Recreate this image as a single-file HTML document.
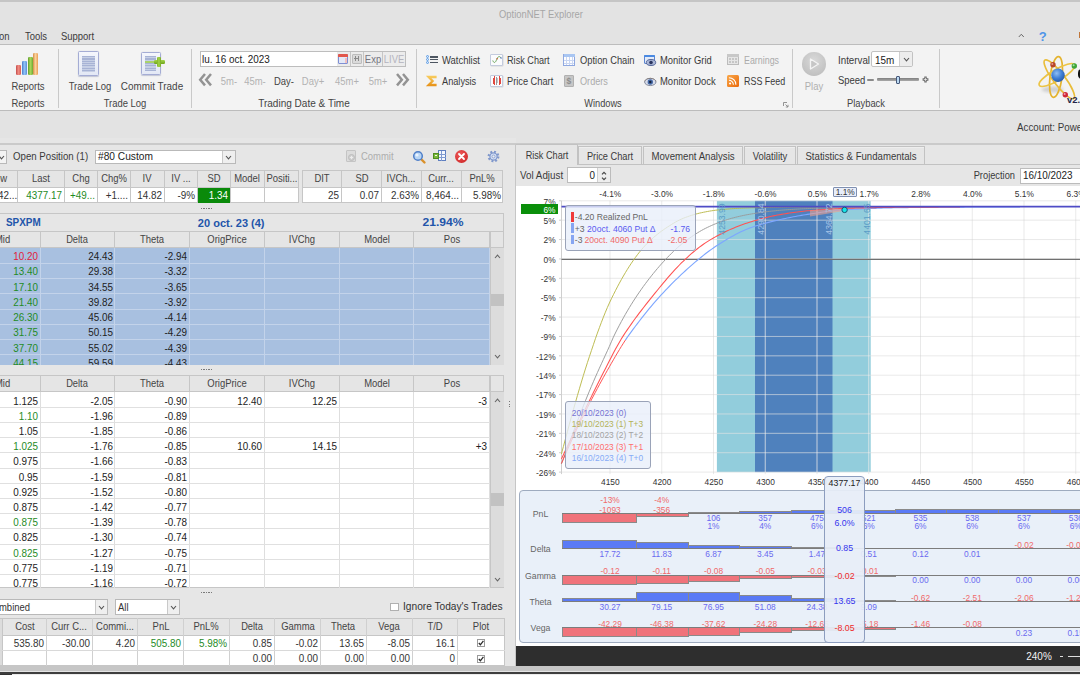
<!DOCTYPE html>
<html><head><meta charset="utf-8"><title>OptionNET Explorer</title>
<style>
html,body{margin:0;padding:0;background:#e4e4e4;}
#app{position:relative;width:1080px;height:675px;overflow:hidden;background:#e4e4e4;font-family:"Liberation Sans",sans-serif;}
.t{position:absolute;white-space:nowrap;line-height:1;display:block;}
.r{position:absolute;box-sizing:border-box;}
svg{position:absolute;overflow:visible;}
</style></head><body><div id="app">
<div class="r" style="left:0px;top:0px;width:1080px;height:2px;background:#c5c5c5;"></div>
<div class="r" style="left:0px;top:2px;width:1080px;height:43px;background:#e3e3e3;"></div>
<span class="t" style="left:541px;top:13.9px;font-size:10.5px;color:#a6a6a6;transform:translate(-50%,-50%) scaleX(0.895);transform-origin:50% 50%;">OptionNET Explorer</span>
<span class="t" style="left:-1px;top:35.9px;font-size:10.5px;color:#3a3a3a;transform:translate(0,-50%) scaleX(0.9);transform-origin:0 50%;">on</span>
<span class="t" style="left:24.5px;top:35.9px;font-size:10.5px;color:#3a3a3a;transform:translate(0,-50%) scaleX(0.9);transform-origin:0 50%;">Tools</span>
<span class="t" style="left:61px;top:35.9px;font-size:10.5px;color:#3a3a3a;transform:translate(0,-50%) scaleX(0.9);transform-origin:0 50%;">Support</span>
<div class="r" style="left:0px;top:44.3px;width:1080px;height:66.8px;background:#f3f3f3;border-top:1px solid #bdbdbd;border-bottom:1px solid #bcbcbc;"></div>
<div class="r" style="left:0px;top:111px;width:1080px;height:33px;background:#e3e3e3;"></div>
<div class="r" style="left:58px;top:48.5px;width:1px;height:59px;background:#c9c9c9;"></div>
<div class="r" style="left:191px;top:48.5px;width:1px;height:59px;background:#c9c9c9;"></div>
<div class="r" style="left:416px;top:48.5px;width:1px;height:59px;background:#c9c9c9;"></div>
<div class="r" style="left:792px;top:48.5px;width:1px;height:59px;background:#c9c9c9;"></div>
<div class="r" style="left:939px;top:48.5px;width:1px;height:59px;background:#c9c9c9;"></div>
<span class="t" style="left:27.5px;top:85.9px;font-size:10.5px;color:#444;transform:translate(-50%,-50%) scaleX(0.9);transform-origin:50% 50%;">Reports</span>
<span class="t" style="left:27.5px;top:102.9px;font-size:10.5px;color:#444;transform:translate(-50%,-50%) scaleX(0.9);transform-origin:50% 50%;">Reports</span>
<span class="t" style="left:89.5px;top:85.9px;font-size:10.5px;color:#444;transform:translate(-50%,-50%) scaleX(0.9);transform-origin:50% 50%;">Trade Log</span>
<span class="t" style="left:152px;top:85.9px;font-size:10.5px;color:#444;transform:translate(-50%,-50%) scaleX(0.945);transform-origin:50% 50%;">Commit Trade</span>
<span class="t" style="left:125px;top:102.9px;font-size:10.5px;color:#444;transform:translate(-50%,-50%) scaleX(0.9);transform-origin:50% 50%;">Trade Log</span>
<span class="t" style="left:304px;top:102.9px;font-size:10.5px;color:#444;transform:translate(-50%,-50%) scaleX(0.955);transform-origin:50% 50%;">Trading Date &amp; Time</span>
<span class="t" style="left:603px;top:102.9px;font-size:10.5px;color:#444;transform:translate(-50%,-50%) scaleX(0.88);transform-origin:50% 50%;">Windows</span>
<span class="t" style="left:866px;top:102.9px;font-size:10.5px;color:#444;transform:translate(-50%,-50%) scaleX(0.89);transform-origin:50% 50%;">Playback</span>
<div class="r" style="left:15.8px;top:65.4px;width:5.3px;height:9.5px;background:linear-gradient(90deg,#c44a4a,#ee8a80 45%,#ee8a80 55%,#d65a54);border-radius:1.3px;"></div>
<div class="r" style="left:21.8px;top:61.3px;width:5.3px;height:13.600000000000009px;background:linear-gradient(90deg,#4a7aca,#8cc0f4 45%,#8cc0f4 55%,#5a8cd8);border-radius:1.3px;"></div>
<div class="r" style="left:27.6px;top:57.1px;width:5.3px;height:17.800000000000004px;background:linear-gradient(90deg,#5c9c2a,#a6d458 45%,#a6d458 55%,#6aa832);border-radius:1.3px;"></div>
<div class="r" style="left:33.2px;top:53.1px;width:5.3px;height:21.800000000000004px;background:linear-gradient(90deg,#d48c44,#fad09a 45%,#fad09a 55%,#ea9c50);border-radius:1.3px;"></div>
<div class="r" style="left:78.3px;top:51.3px;width:20.6px;height:24.5px;background:linear-gradient(180deg,#f4f6fc,#e3e8f5);border:1px solid #a4acd4;border-radius:1.5px;box-shadow:0 0.5px 1px rgba(120,130,170,0.4);"></div>
<div class="r" style="left:82px;top:55.8px;width:13.3px;height:16.1px;background:repeating-linear-gradient(180deg,#a7b3d5 0,#a7b3d5 1.25px,#c6cfe5 1.25px,#c6cfe5 2.3px);"></div>
<div class="r" style="left:141.3px;top:52.4px;width:19.3px;height:22.5px;background:linear-gradient(180deg,#f4f6fc,#e3e8f5);border:1px solid #a4acd4;border-radius:1.5px;box-shadow:0 0.5px 1px rgba(120,130,170,0.4);"></div>
<div class="r" style="left:145.3px;top:56.2px;width:10.8px;height:14.8px;background:repeating-linear-gradient(180deg,#a7b3d5 0,#a7b3d5 1.25px,#c6cfe5 1.25px,#c6cfe5 2.3px);"></div>
<div class="r" style="left:145.3px;top:60.6px;width:10px;height:2.6px;background:#a8d26c;"></div>
<div class="r" style="left:154px;top:59.7px;width:10.6px;height:4.2px;background:linear-gradient(180deg,#a4d44a,#6fa51c);border-radius:1.2px;"></div>
<div class="r" style="left:157.2px;top:56.6px;width:4.2px;height:10.5px;background:linear-gradient(90deg,#7fb526,#a4d44a 50%,#74aa20);border-radius:1.2px;"></div>
<div class="r" style="left:199.5px;top:51px;width:206.5px;height:16.3px;background:#ececec;border:1px solid #bdbdbd;"></div>
<div class="r" style="left:200.5px;top:52px;width:136.5px;height:14.3px;background:#fff;"></div>
<span class="t" style="left:202px;top:59.199999999999996px;font-size:11px;color:#222;transform:translate(0,-50%) scaleX(0.9);transform-origin:0 50%;">lu. 16 oct. 2023</span>
<div class="r" style="left:338.2px;top:54.2px;width:9.8px;height:9.4px;background:#e4e9f7;border:1px solid #7f8fd4;border-radius:1px;"></div>
<div class="r" style="left:338.2px;top:54.2px;width:9.8px;height:2.6px;background:#e2574c;border-radius:1px 1px 0 0;"></div>
<div class="r" style="left:344.5px;top:57.5px;width:2.5px;height:5px;background:#f0c0c0;"></div>
<div class="r" style="left:350px;top:52px;width:1px;height:14.3px;background:#c6c6c6;"></div>
<div class="r" style="left:351.7px;top:53.7px;width:10px;height:10px;background:#dadada;border:1px solid #bcbcbc;border-radius:1px;"></div>
<div class="r" style="left:354px;top:58.3px;width:5.4px;height:1px;background:#8a8a8a;"></div>
<div class="r" style="left:355.3px;top:56.3px;width:1px;height:5px;background:#8a8a8a;"></div>
<div class="r" style="left:358px;top:56.3px;width:1px;height:5px;background:#8a8a8a;"></div>
<div class="r" style="left:363px;top:52px;width:1px;height:14.3px;background:#c6c6c6;"></div>
<span class="t" style="left:373px;top:59.3px;font-size:10.5px;color:#74747f;transform:translate(-50%,-50%) scaleX(0.9);transform-origin:50% 50%;">Exp</span>
<div class="r" style="left:382.3px;top:52px;width:1px;height:14.3px;background:#c6c6c6;"></div>
<span class="t" style="left:394.3px;top:59.3px;font-size:10.5px;color:#b4b4be;transform:translate(-50%,-50%) scaleX(0.9);transform-origin:50% 50%;">LIVE</span>
<svg style="left:197.5px;top:73.3px" width="16" height="13.4" viewBox="0 0 16 13.4"><path d="M7 1 L2.2 6.7 L7 12.4 M13 1 L8.2 6.7 L13 12.4" fill="none" stroke="#939393" stroke-width="2.5"/></svg>
<svg style="left:393.5px;top:73.3px" width="16" height="13.4" viewBox="0 0 16 13.4"><path d="M3 1 L7.8 6.7 L3 12.4 M9 1 L13.8 6.7 L9 12.4" fill="none" stroke="#939393" stroke-width="2.5"/></svg>
<span class="t" style="left:228.5px;top:80.5px;font-size:10.5px;color:#b2b2b2;transform:translate(-50%,-50%) scaleX(0.9);transform-origin:50% 50%;">5m-</span>
<span class="t" style="left:255px;top:80.5px;font-size:10.5px;color:#b2b2b2;transform:translate(-50%,-50%) scaleX(0.9);transform-origin:50% 50%;">45m-</span>
<span class="t" style="left:284px;top:80.5px;font-size:10.5px;color:#444;transform:translate(-50%,-50%) scaleX(0.9);transform-origin:50% 50%;">Day-</span>
<span class="t" style="left:313px;top:80.5px;font-size:10.5px;color:#b2b2b2;transform:translate(-50%,-50%) scaleX(0.9);transform-origin:50% 50%;">Day+</span>
<span class="t" style="left:346.5px;top:80.5px;font-size:10.5px;color:#b2b2b2;transform:translate(-50%,-50%) scaleX(0.9);transform-origin:50% 50%;">45m+</span>
<span class="t" style="left:377.5px;top:80.5px;font-size:10.5px;color:#b2b2b2;transform:translate(-50%,-50%) scaleX(0.9);transform-origin:50% 50%;">5m+</span>
<span class="t" style="left:441.5px;top:59.699999999999996px;font-size:10.5px;color:#3a3a3a;transform:translate(0,-50%) scaleX(0.9);transform-origin:0 50%;">Watchlist</span>
<span class="t" style="left:441.5px;top:81.0px;font-size:10.5px;color:#3a3a3a;transform:translate(0,-50%) scaleX(0.875);transform-origin:0 50%;">Analysis</span>
<span class="t" style="left:507px;top:59.699999999999996px;font-size:10.5px;color:#3a3a3a;transform:translate(0,-50%) scaleX(0.87);transform-origin:0 50%;">Risk Chart</span>
<span class="t" style="left:507px;top:81.0px;font-size:10.5px;color:#3a3a3a;transform:translate(0,-50%) scaleX(0.88);transform-origin:0 50%;">Price Chart</span>
<span class="t" style="left:579.5px;top:59.699999999999996px;font-size:10.5px;color:#3a3a3a;transform:translate(0,-50%) scaleX(0.89);transform-origin:0 50%;">Option Chain</span>
<span class="t" style="left:579.5px;top:81.0px;font-size:10.5px;color:#ababab;transform:translate(0,-50%) scaleX(0.87);transform-origin:0 50%;">Orders</span>
<span class="t" style="left:660px;top:59.699999999999996px;font-size:10.5px;color:#3a3a3a;transform:translate(0,-50%) scaleX(0.895);transform-origin:0 50%;">Monitor Grid</span>
<span class="t" style="left:660px;top:81.0px;font-size:10.5px;color:#3a3a3a;transform:translate(0,-50%) scaleX(0.9);transform-origin:0 50%;">Monitor Dock</span>
<span class="t" style="left:744px;top:59.699999999999996px;font-size:10.5px;color:#ababab;transform:translate(0,-50%) scaleX(0.845);transform-origin:0 50%;">Earnings</span>
<span class="t" style="left:744px;top:81.0px;font-size:10.5px;color:#3a3a3a;transform:translate(0,-50%) scaleX(0.85);transform-origin:0 50%;">RSS Feed</span>
<div class="r" style="left:425.8px;top:55.4px;width:3px;height:3px;background:#dbe9fb;border:1px solid #5a9be6;border-radius:50%;"></div>
<div class="r" style="left:429.8px;top:56.1px;width:7.8px;height:1.45px;background:#4d5661;"></div>
<div class="r" style="left:425.8px;top:58.4px;width:3px;height:3px;background:#dbe9fb;border:1px solid #5a9be6;border-radius:50%;"></div>
<div class="r" style="left:429.8px;top:59.050000000000004px;width:7.8px;height:1.45px;background:#4d5661;"></div>
<div class="r" style="left:425.8px;top:61.4px;width:3px;height:3px;background:#dbe9fb;border:1px solid #5a9be6;border-radius:50%;"></div>
<div class="r" style="left:429.8px;top:62.0px;width:7.8px;height:1.45px;background:#4d5661;"></div>
<svg style="left:426px;top:74.5px" width="12" height="12" viewBox="0 0 12 12"><defs><linearGradient id="sg" x1="0" y1="0" x2="0" y2="1"><stop offset="0" stop-color="#f7c95a"/><stop offset="1" stop-color="#e8951c"/></linearGradient></defs><path d="M10.6 2 L2.6 2 L6.6 6 L2.6 10 L10.6 10" fill="none" stroke="url(#sg)" stroke-width="2.3" stroke-linejoin="miter"/></svg>
<div class="r" style="left:490.4px;top:53.6px;width:12.2px;height:12px;background:#fbfbfd;border:1px solid #c3cbdd;border-radius:1px;box-shadow:0.5px 0.5px 0 #d8d8d8;"></div>
<svg style="left:491.5px;top:55px" width="10" height="9" viewBox="0 0 10 9"><path d="M0.8 5.5 C1.8 8.5 3.4 8 4.6 4.6 S 7.6 0.6 9.2 3.2" fill="none" stroke="#6aa65a" stroke-width="1"/><circle cx="5.2" cy="3.8" r="0.8" fill="#d05a3a"/><circle cx="9" cy="3" r="0.7" fill="#4a6ad0"/></svg>
<div class="r" style="left:490.4px;top:74.6px;width:12.2px;height:12.2px;background:#fbfbfd;border:1px solid #c3cbdd;border-radius:1px;box-shadow:0.5px 0.5px 0 #d8d8d8;"></div>
<div class="r" style="left:493px;top:77.6px;width:2.2px;height:6.2px;background:#e0483e;"></div>
<div class="r" style="left:493.7px;top:76.3px;width:0.8px;height:9px;background:#e0483e;"></div>
<div class="r" style="left:495.9px;top:78.2px;width:1.8px;height:4.4px;background:#c4c4c4;"></div>
<div class="r" style="left:496.4px;top:77px;width:0.8px;height:7.5px;background:#9a9a9a;"></div>
<div class="r" style="left:498.6px;top:77.6px;width:2.2px;height:6.2px;background:#e0483e;"></div>
<div class="r" style="left:499.3px;top:76.3px;width:0.8px;height:9px;background:#e0483e;"></div>
<div class="r" style="left:563px;top:53.6px;width:12px;height:12.2px;background:#fdfdff;border:1px solid #8fa8e0;"></div>
<div class="r" style="left:563.5px;top:54.1px;width:11px;height:2.6px;background:#a9c6f2;"></div>
<div class="r" style="left:565.8px;top:56.7px;width:0.7px;height:8.6px;background:#c9d6f2;"></div>
<div class="r" style="left:568.8px;top:56.7px;width:0.7px;height:8.6px;background:#c9d6f2;"></div>
<div class="r" style="left:571.8px;top:56.7px;width:0.7px;height:8.6px;background:#c9d6f2;"></div>
<div class="r" style="left:563.6px;top:59.6px;width:10.8px;height:0.7px;background:#c9d6f2;"></div>
<div class="r" style="left:563.6px;top:62.5px;width:10.8px;height:0.7px;background:#c9d6f2;"></div>
<div class="r" style="left:564px;top:75px;width:9.8px;height:11.6px;background:#c6c6c6;border:1px solid #b0b0b0;border-radius:1px;"></div>
<span class="t" style="left:568.9px;top:80.9px;font-size:8.5px;color:#8e8e8e;transform:translate(-50%,-50%) scaleX(1);transform-origin:50% 50%;font-weight:bold;">$</span>
<div class="r" style="left:644px;top:54.5px;width:10.8px;height:9.4px;background:#e3ebf9;border:1px solid #5d86d0;border-radius:1px;"></div>
<div class="r" style="left:644px;top:54.5px;width:10.8px;height:2.8px;background:#4a8ae2;border-radius:1px 1px 0 0;"></div>
<svg style="left:646.4px;top:59px" width="10" height="7" viewBox="0 0 10 7"><ellipse cx="5" cy="3.5" rx="4.7" ry="3" fill="#aab6d6" stroke="#4a5c92" stroke-width="0.9"/><circle cx="5" cy="3.5" r="1.8" fill="#2a3560"/></svg>
<svg style="left:643.8px;top:76.5px" width="12.6" height="9.4" viewBox="0 0 12.6 9.4"><path d="M0.6 4.4 Q6.3 -1.6 12 4.4" fill="none" stroke="#a07a52" stroke-width="1.3"/><ellipse cx="6.3" cy="5" rx="5.7" ry="3.6" fill="#d5dbea" stroke="#6d7388" stroke-width="0.8"/><circle cx="6.3" cy="5" r="2.7" fill="#4468a6"/><circle cx="6.3" cy="5" r="1.2" fill="#16203a"/></svg>
<div class="r" style="left:727px;top:54px;width:11.6px;height:11.3px;background:#e6e6e6;border:1px solid #bcbcbc;"></div>
<div class="r" style="left:727px;top:54px;width:11.6px;height:3px;background:#c8c8c8;"></div>
<div class="r" style="left:729.0px;top:58.4px;width:1.9px;height:1.9px;background:#c6c6c6;"></div>
<div class="r" style="left:729.0px;top:61.3px;width:1.9px;height:1.9px;background:#c6c6c6;"></div>
<div class="r" style="left:731.9px;top:58.4px;width:1.9px;height:1.9px;background:#c6c6c6;"></div>
<div class="r" style="left:731.9px;top:61.3px;width:1.9px;height:1.9px;background:#c6c6c6;"></div>
<div class="r" style="left:734.8px;top:58.4px;width:1.9px;height:1.9px;background:#c6c6c6;"></div>
<div class="r" style="left:734.8px;top:61.3px;width:1.9px;height:1.9px;background:#c6c6c6;"></div>
<div class="r" style="left:727px;top:75px;width:11.6px;height:11.6px;background:linear-gradient(135deg,#f9a84a,#ea6a0c);border-radius:1.5px;"></div>
<svg style="left:727px;top:75px" width="11.6" height="11.6" viewBox="0 0 12 12"><circle cx="3.2" cy="8.8" r="1.1" fill="#fff"/><path d="M2 5.4 A4.6 4.6 0 0 1 6.6 10 M2 2.8 A7.2 7.2 0 0 1 9.2 10" fill="none" stroke="#fff" stroke-width="1.1"/></svg>
<svg style="left:783px;top:102px" width="6" height="6" viewBox="0 0 6 6"><path d="M0.5 4 V0.5 H4 M2.5 2.5 L5 5 M5 2.8 V5 H2.8" fill="none" stroke="#888" stroke-width="0.9"/></svg>
<div class="r" style="left:802px;top:52.2px;width:23.5px;height:23.5px;background:radial-gradient(circle at 50% 35%,#d9d9d9,#b9b9b9);border-radius:50%;"></div>
<svg style="left:809px;top:58px" width="11" height="12" viewBox="0 0 11 12"><path d="M1.5 1 L9.5 6 L1.5 11 Z" fill="#c6c6c6" stroke="#f4f4f4" stroke-width="1.3" stroke-linejoin="round"/></svg>
<span class="t" style="left:813.5px;top:85.9px;font-size:10.5px;color:#b0b0b0;transform:translate(-50%,-50%) scaleX(0.9);transform-origin:50% 50%;">Play</span>
<span class="t" style="left:837.5px;top:59.699999999999996px;font-size:10.5px;color:#3a3a3a;transform:translate(0,-50%) scaleX(0.93);transform-origin:0 50%;">Interval</span>
<div class="r" style="left:871px;top:51.3px;width:42px;height:16.2px;background:#fff;border:1px solid #c2c2c2;border-radius:2px;"></div>
<div class="r" style="left:899px;top:52.3px;width:1px;height:14.2px;background:#cfcfcf;"></div>
<div class="r" style="left:900px;top:52.3px;width:12px;height:14.2px;background:#ededed;border-radius:0 2px 2px 0;"></div>
<span class="t" style="left:875px;top:59.6px;font-size:11px;color:#222;transform:translate(0,-50%) scaleX(0.9);transform-origin:0 50%;">15m</span>
<svg style="left:902.5px;top:57px" width="7" height="5" viewBox="0 0 7 5"><path d="M1 1 L3.5 3.8 L6 1" fill="none" stroke="#555" stroke-width="1.1"/></svg>
<span class="t" style="left:837.5px;top:79.9px;font-size:10.5px;color:#3a3a3a;transform:translate(0,-50%) scaleX(0.9);transform-origin:0 50%;">Speed</span>
<div class="r" style="left:867.4px;top:78.5px;width:6.2px;height:2.4px;background:#8a8a8a;border-radius:1px;"></div>
<div class="r" style="left:877px;top:78.3px;width:42px;height:2.8px;background:linear-gradient(180deg,#7f7f7f,#a9a9a9);border-radius:1px;"></div>
<div class="r" style="left:896px;top:75.8px;width:3.7px;height:8px;background:#bcdaf2;border:1px solid #46587a;border-radius:1px;"></div>
<svg style="left:921.8px;top:76.2px" width="7" height="7" viewBox="0 0 7 7"><path d="M3.5 0.6 V6.4 M0.6 3.5 H6.4" stroke="#6a6a6a" stroke-width="2.4"/><path d="M3.5 1.7 V5.3 M1.7 3.5 H5.3" stroke="#f2f2f2" stroke-width="0.7"/></svg>
<svg style="left:1018.3px;top:33px" width="6.6" height="5" viewBox="0 0 8 6"><path d="M1 4.8 L4 1.5 L7 4.8" fill="none" stroke="#666" stroke-width="1.2"/></svg>
<span class="t" style="left:1042.7px;top:35.8px;font-size:13px;color:#4f95e8;transform:translate(-50%,-50%) scaleX(1);transform-origin:50% 50%;font-weight:bold;">?</span>
<div class="r" style="left:1078.5px;top:32px;width:2px;height:5.5px;background:#c0763a;"></div>
<svg style="left:1030px;top:48px" width="50" height="60" viewBox="1030 48 50 60">
<defs><radialGradient id="nuc" cx="40%" cy="35%" r="70%"><stop offset="0" stop-color="#8fbdf2"/><stop offset="0.55" stop-color="#3f7fd6"/><stop offset="1" stop-color="#2457a8"/></radialGradient>
<filter id="bl"><feGaussianBlur stdDeviation="1.6"/></filter></defs>
<ellipse cx="1052.5" cy="89.5" rx="11" ry="3" fill="#9a9a9a" opacity="0.4" filter="url(#bl)"/>
<ellipse cx="1056" cy="77" rx="20.5" ry="6" fill="none" stroke="#e4b32e" stroke-width="1.7" transform="rotate(97.5 1056 77)"/>
<ellipse cx="1057" cy="75" rx="20.5" ry="5.6" fill="none" stroke="#ecc445" stroke-width="1.7" transform="rotate(-30.3 1057 75)"/>
<ellipse cx="1059.3" cy="79.3" rx="24" ry="5.8" fill="none" stroke="#e9bd3a" stroke-width="1.7" transform="rotate(52.8 1059.3 79.3)"/>
<circle cx="1058" cy="75.3" r="6.7" fill="url(#nuc)"/>
<circle cx="1053" cy="64.7" r="2.7" fill="#b8452a"/><circle cx="1052.3" cy="63.9" r="1" fill="#e39a80"/>
<circle cx="1074.3" cy="66" r="2.7" fill="#3fa53a"/><circle cx="1073.6" cy="65.2" r="1" fill="#a5e09a"/>
<circle cx="1065.3" cy="94.7" r="2.7" fill="#d02a3a"/><circle cx="1064.6" cy="93.9" r="1" fill="#f2a0a8"/>
</svg>
<div class="r" style="left:1078px;top:69px;width:4px;height:9.5px;background:#111;border-radius:4px 0 0 4px;"></div>
<span class="t" style="left:1067px;top:100px;font-size:9.5px;color:#26264a;transform:translate(0,-50%) scaleX(1);transform-origin:0 50%;font-weight:bold;">v2.0</span>
<span class="t" style="left:1017px;top:127.10000000000001px;font-size:10.5px;color:#3a3a3a;transform:translate(0,-50%) scaleX(0.93);transform-origin:0 50%;">Account: Power</span>
<div class="r" style="left:0px;top:138px;width:516px;height:533px;background:#e6e6e6;"></div>
<div class="r" style="left:0px;top:143.2px;width:1080px;height:1.7px;background:#cacaca;"></div>
<div class="r" style="left:514.7px;top:144px;width:1.4px;height:524px;background:#c6c6c6;"></div>
<div class="r" style="left:-8px;top:149.5px;width:14.5px;height:14px;background:#f4f4f4;border:1px solid #b9b9b9;"></div>
<svg style="left:-2px;top:154.5px" width="7" height="5" viewBox="0 0 7 5"><path d="M1 1 L3.5 3.8 L6 1" fill="none" stroke="#555" stroke-width="1.1"/></svg>
<span class="t" style="left:13px;top:155.9px;font-size:10.5px;color:#3a3a3a;transform:translate(0,-50%) scaleX(0.92);transform-origin:0 50%;">Open Position (1)</span>
<div class="r" style="left:95px;top:149.5px;width:140.5px;height:14px;background:#fff;border:1px solid #b9b9b9;"></div>
<div class="r" style="left:222px;top:150.5px;width:12.5px;height:12px;background:#efefef;border-left:1px solid #c9c9c9;"></div>
<svg style="left:225px;top:154.5px" width="7" height="5" viewBox="0 0 7 5"><path d="M1 1 L3.5 3.8 L6 1" fill="none" stroke="#555" stroke-width="1.1"/></svg>
<span class="t" style="left:98px;top:155.9px;font-size:10.5px;color:#222;transform:translate(0,-50%) scaleX(0.97);transform-origin:0 50%;">#80 Custom</span>
<div class="r" style="left:346px;top:150px;width:10px;height:11.5px;background:#dcdcdc;border:1px solid #c4c4c4;border-radius:1px;"></div>
<div class="r" style="left:348.3px;top:154px;width:7px;height:7px;background:#d0d0d0;border:1px solid #bcbcbc;border-radius:50%;"></div>
<div class="r" style="left:350.3px;top:157px;width:3px;height:1px;background:#ececec;"></div>
<div class="r" style="left:351.3px;top:156px;width:1px;height:3px;background:#ececec;"></div>
<span class="t" style="left:361px;top:155.9px;font-size:10.5px;color:#adadad;transform:translate(0,-50%) scaleX(0.9);transform-origin:0 50%;">Commit</span>
<svg style="left:411.5px;top:149.5px" width="14" height="14" viewBox="0 0 14 14"><path d="M8.5 8.5 L12.5 12.5" stroke="#d9902a" stroke-width="2.4" stroke-linecap="round"/><circle cx="6" cy="6" r="4.3" fill="#b9d6f5" stroke="#4f7fc8" stroke-width="1.5"/><circle cx="5" cy="5" r="1.6" fill="#e9f3ff"/></svg>
<div class="r" style="left:437.5px;top:150.3px;width:8.3px;height:10.7px;background:#f4f7fd;border:1px solid #5f7fc0;"></div>
<div class="r" style="left:441.3px;top:151px;width:1px;height:9.5px;background:#7f9ad0;"></div>
<div class="r" style="left:438px;top:153.7px;width:7.5px;height:1px;background:#7f9ad0;"></div>
<div class="r" style="left:438px;top:157.2px;width:7.5px;height:1px;background:#7f9ad0;"></div>
<div class="r" style="left:433px;top:152.5px;width:5.6px;height:6.8px;background:#7ab83a;border:1px solid #4f8d22;"></div>
<div class="r" style="left:434.5px;top:155.4px;width:2.8px;height:1px;background:#f2f8e8;"></div>
<div class="r" style="left:454.5px;top:150px;width:13px;height:13px;background:radial-gradient(circle at 40% 35%,#ef5a5a,#c81e1e);border-radius:50%;"></div>
<svg style="left:457.5px;top:153px" width="7" height="7" viewBox="0 0 7 7"><path d="M1 1 L6 6 M6 1 L1 6" stroke="#fff" stroke-width="1.8" stroke-linecap="round"/></svg>
<svg style="left:486.5px;top:150px" width="13" height="13" viewBox="0 0 13 13"><circle cx="6.5" cy="6.5" r="4.6" fill="none" stroke="#8098cc" stroke-width="2.6" stroke-dasharray="1.8 1.81"/><circle cx="6.5" cy="6.5" r="3.6" fill="#d5e0f4" stroke="#8098cc" stroke-width="1.2"/><circle cx="6.5" cy="6.5" r="1.5" fill="#eeeeee" stroke="#8098cc" stroke-width="0.8"/></svg>
<div class="r" style="left:-16px;top:170px;width:315px;height:32.7px;background:#fff;border:1px solid #c6c6c6;"></div>
<div class="r" style="left:-16px;top:170px;width:315px;height:17.5px;background:#e5e5e5;border:1px solid #c6c6c6;"></div>
<div class="r" style="left:17px;top:170px;width:1px;height:32.7px;background:#c6c6c6;"></div>
<div class="r" style="left:64px;top:170px;width:1px;height:32.7px;background:#c6c6c6;"></div>
<div class="r" style="left:97px;top:170px;width:1px;height:32.7px;background:#c6c6c6;"></div>
<div class="r" style="left:130px;top:170px;width:1px;height:32.7px;background:#c6c6c6;"></div>
<div class="r" style="left:163.5px;top:170px;width:1px;height:32.7px;background:#c6c6c6;"></div>
<div class="r" style="left:197px;top:170px;width:1px;height:32.7px;background:#c6c6c6;"></div>
<div class="r" style="left:229.5px;top:170px;width:1px;height:32.7px;background:#c6c6c6;"></div>
<div class="r" style="left:263.5px;top:170px;width:1px;height:32.7px;background:#c6c6c6;"></div>
<span class="t" style="left:-5px;top:178.4px;font-size:10.5px;color:#444;transform:translate(0,-50%) scaleX(0.9);transform-origin:0 50%;">ow</span>
<span class="t" style="left:41.0px;top:178.4px;font-size:10.5px;color:#444;transform:translate(-50%,-50%) scaleX(0.9);transform-origin:50% 50%;">Last</span>
<span class="t" style="left:81.0px;top:178.4px;font-size:10.5px;color:#444;transform:translate(-50%,-50%) scaleX(0.9);transform-origin:50% 50%;">Chg</span>
<span class="t" style="left:114.0px;top:178.4px;font-size:10.5px;color:#444;transform:translate(-50%,-50%) scaleX(0.9);transform-origin:50% 50%;">Chg%</span>
<span class="t" style="left:147.25px;top:178.4px;font-size:10.5px;color:#444;transform:translate(-50%,-50%) scaleX(0.9);transform-origin:50% 50%;">IV</span>
<span class="t" style="left:180.75px;top:178.4px;font-size:10.5px;color:#444;transform:translate(-50%,-50%) scaleX(0.9);transform-origin:50% 50%;">IV ...</span>
<span class="t" style="left:213.75px;top:178.4px;font-size:10.5px;color:#444;transform:translate(-50%,-50%) scaleX(0.9);transform-origin:50% 50%;">SD</span>
<span class="t" style="left:247.0px;top:178.4px;font-size:10.5px;color:#444;transform:translate(-50%,-50%) scaleX(0.9);transform-origin:50% 50%;">Model</span>
<span class="t" style="left:281.75px;top:178.4px;font-size:10.5px;color:#444;transform:translate(-50%,-50%) scaleX(0.9);transform-origin:50% 50%;">Positi...</span>
<div class="r" style="left:197.5px;top:188px;width:32px;height:14.5px;background:#0a8a0a;"></div>
<span class="t" style="left:-2.5px;top:195.4px;font-size:10.5px;color:#333;transform:translate(0,-50%) scaleX(0.94);transform-origin:0 50%;">42...</span>
<span class="t" style="left:62px;top:195.4px;font-size:10.5px;color:#1f8b1f;transform:translate(-100%,-50%) scaleX(0.94);transform-origin:100% 50%;">4377.17</span>
<span class="t" style="left:95px;top:195.4px;font-size:10.5px;color:#1f8b1f;transform:translate(-100%,-50%) scaleX(0.94);transform-origin:100% 50%;">+49...</span>
<span class="t" style="left:128px;top:195.4px;font-size:10.5px;color:#333;transform:translate(-100%,-50%) scaleX(0.94);transform-origin:100% 50%;">+1....</span>
<span class="t" style="left:161.5px;top:195.4px;font-size:10.5px;color:#333;transform:translate(-100%,-50%) scaleX(0.94);transform-origin:100% 50%;">14.82</span>
<span class="t" style="left:195px;top:195.4px;font-size:10.5px;color:#333;transform:translate(-100%,-50%) scaleX(0.94);transform-origin:100% 50%;">-9%</span>
<span class="t" style="left:227.5px;top:195.4px;font-size:10.5px;color:#fff;transform:translate(-100%,-50%) scaleX(0.94);transform-origin:100% 50%;">1.34</span>
<div class="r" style="left:301.5px;top:170px;width:201.5px;height:32.7px;background:#fff;border:1px solid #c6c6c6;"></div>
<div class="r" style="left:301.5px;top:170px;width:201.5px;height:17.5px;background:#e5e5e5;border:1px solid #c6c6c6;"></div>
<div class="r" style="left:341px;top:170px;width:1px;height:32.7px;background:#c6c6c6;"></div>
<div class="r" style="left:381px;top:170px;width:1px;height:32.7px;background:#c6c6c6;"></div>
<div class="r" style="left:420.5px;top:170px;width:1px;height:32.7px;background:#c6c6c6;"></div>
<div class="r" style="left:460.5px;top:170px;width:1px;height:32.7px;background:#c6c6c6;"></div>
<span class="t" style="left:321.75px;top:178.4px;font-size:10.5px;color:#444;transform:translate(-50%,-50%) scaleX(0.9);transform-origin:50% 50%;">DIT</span>
<span class="t" style="left:361.5px;top:178.4px;font-size:10.5px;color:#444;transform:translate(-50%,-50%) scaleX(0.9);transform-origin:50% 50%;">SD</span>
<span class="t" style="left:401.25px;top:178.4px;font-size:10.5px;color:#444;transform:translate(-50%,-50%) scaleX(0.9);transform-origin:50% 50%;">IVCh...</span>
<span class="t" style="left:441.0px;top:178.4px;font-size:10.5px;color:#444;transform:translate(-50%,-50%) scaleX(0.9);transform-origin:50% 50%;">Curr...</span>
<span class="t" style="left:482.0px;top:178.4px;font-size:10.5px;color:#444;transform:translate(-50%,-50%) scaleX(0.9);transform-origin:50% 50%;">PnL%</span>
<span class="t" style="left:339px;top:195.4px;font-size:10.5px;color:#333;transform:translate(-100%,-50%) scaleX(0.94);transform-origin:100% 50%;">25</span>
<span class="t" style="left:379px;top:195.4px;font-size:10.5px;color:#333;transform:translate(-100%,-50%) scaleX(0.94);transform-origin:100% 50%;">0.07</span>
<span class="t" style="left:418.5px;top:195.4px;font-size:10.5px;color:#333;transform:translate(-100%,-50%) scaleX(0.94);transform-origin:100% 50%;">2.63%</span>
<span class="t" style="left:458.5px;top:195.4px;font-size:10.5px;color:#333;transform:translate(-100%,-50%) scaleX(0.94);transform-origin:100% 50%;">8,464...</span>
<span class="t" style="left:500.5px;top:195.4px;font-size:10.5px;color:#333;transform:translate(-100%,-50%) scaleX(0.94);transform-origin:100% 50%;">5.98%</span>
<div class="r" style="left:201.0px;top:207.5px;width:1.4px;height:1.4px;background:#7a7a7a;"></div>
<div class="r" style="left:203.4px;top:207.5px;width:1.4px;height:1.4px;background:#7a7a7a;"></div>
<div class="r" style="left:205.8px;top:207.5px;width:1.4px;height:1.4px;background:#7a7a7a;"></div>
<div class="r" style="left:208.2px;top:207.5px;width:1.4px;height:1.4px;background:#7a7a7a;"></div>
<div class="r" style="left:210.6px;top:207.5px;width:1.4px;height:1.4px;background:#7a7a7a;"></div>
<div class="r" style="left:-35px;top:213px;width:539px;height:151.5px;background:#e6e6e6;border:1px solid #c6c6c6;"></div>
<span class="t" style="left:5.5px;top:221.9px;font-size:11px;color:#2255aa;transform:translate(0,-50%) scaleX(0.9);transform-origin:0 50%;font-weight:bold;">SPXPM</span>
<span class="t" style="left:231.2px;top:222.5px;font-size:11px;color:#2255aa;transform:translate(-50%,-50%) scaleX(1.0);transform-origin:50% 50%;font-weight:bold;">20 oct. 23 (4)</span>
<span class="t" style="left:442.5px;top:221.9px;font-size:11px;color:#2255aa;transform:translate(-50%,-50%) scaleX(1.1);transform-origin:50% 50%;font-weight:bold;">21.94%</span>
<div class="r" style="left:-35px;top:230.5px;width:539px;height:17.5px;background:#e5e5e5;border:1px solid #c6c6c6;"></div>
<div class="r" style="left:39.5px;top:230.5px;width:1px;height:17.5px;background:#c6c6c6;"></div>
<div class="r" style="left:114px;top:230.5px;width:1px;height:17.5px;background:#c6c6c6;"></div>
<div class="r" style="left:188.9px;top:230.5px;width:1px;height:17.5px;background:#c6c6c6;"></div>
<div class="r" style="left:263.9px;top:230.5px;width:1px;height:17.5px;background:#c6c6c6;"></div>
<div class="r" style="left:338.8px;top:230.5px;width:1px;height:17.5px;background:#c6c6c6;"></div>
<div class="r" style="left:413.3px;top:230.5px;width:1px;height:17.5px;background:#c6c6c6;"></div>
<div class="r" style="left:489px;top:230.5px;width:1px;height:17.5px;background:#c6c6c6;"></div>
<span class="t" style="left:-5.5px;top:238.9px;font-size:10.5px;color:#444;transform:translate(0,-50%) scaleX(0.9);transform-origin:0 50%;">Mid</span>
<span class="t" style="left:77.25px;top:238.9px;font-size:10.5px;color:#444;transform:translate(-50%,-50%) scaleX(0.885);transform-origin:50% 50%;">Delta</span>
<span class="t" style="left:151.95px;top:238.9px;font-size:10.5px;color:#444;transform:translate(-50%,-50%) scaleX(0.9);transform-origin:50% 50%;">Theta</span>
<span class="t" style="left:226.89999999999998px;top:238.9px;font-size:10.5px;color:#444;transform:translate(-50%,-50%) scaleX(0.9);transform-origin:50% 50%;">OrigPrice</span>
<span class="t" style="left:301.85px;top:238.9px;font-size:10.5px;color:#444;transform:translate(-50%,-50%) scaleX(0.9);transform-origin:50% 50%;">IVChg</span>
<span class="t" style="left:376.55px;top:238.9px;font-size:10.5px;color:#444;transform:translate(-50%,-50%) scaleX(0.9);transform-origin:50% 50%;">Model</span>
<span class="t" style="left:451.65px;top:238.9px;font-size:10.5px;color:#444;transform:translate(-50%,-50%) scaleX(0.9);transform-origin:50% 50%;">Pos</span>
<div class="r" style="left:-35px;top:248px;width:524.5px;height:116.5px;background:#a8c0e0;"></div>
<div class="r" style="left:-35px;top:262.75px;width:524.5px;height:1px;background:#c3d3ea;"></div>
<div class="r" style="left:-35px;top:278.0px;width:524.5px;height:1px;background:#c3d3ea;"></div>
<div class="r" style="left:-35px;top:293.25px;width:524.5px;height:1px;background:#c3d3ea;"></div>
<div class="r" style="left:-35px;top:308.5px;width:524.5px;height:1px;background:#c3d3ea;"></div>
<div class="r" style="left:-35px;top:323.75px;width:524.5px;height:1px;background:#c3d3ea;"></div>
<div class="r" style="left:-35px;top:339.0px;width:524.5px;height:1px;background:#c3d3ea;"></div>
<div class="r" style="left:-35px;top:354.25px;width:524.5px;height:1px;background:#c3d3ea;"></div>
<div class="r" style="left:39.5px;top:248px;width:1px;height:116.5px;background:#c3d3ea;"></div>
<div class="r" style="left:114px;top:248px;width:1px;height:116.5px;background:#c3d3ea;"></div>
<div class="r" style="left:188.9px;top:248px;width:1px;height:116.5px;background:#c3d3ea;"></div>
<div class="r" style="left:263.9px;top:248px;width:1px;height:116.5px;background:#c3d3ea;"></div>
<div class="r" style="left:338.8px;top:248px;width:1px;height:116.5px;background:#c3d3ea;"></div>
<div class="r" style="left:413.3px;top:248px;width:1px;height:116.5px;background:#c3d3ea;"></div>
<div class="r" style="left:489px;top:248px;width:1px;height:116.5px;background:#c3d3ea;"></div>
<div class="r" style="left:-35px;top:248px;width:525px;height:116.5px;overflow:hidden;">
<span class="t" style="left:72.5px;top:8.0px;font-size:10.5px;color:#e0213a;transform:translate(-100%,-50%) scaleX(0.94);transform-origin:100% 50%;">10.20</span>
<span class="t" style="left:147.5px;top:8.0px;font-size:10.5px;color:#222;transform:translate(-100%,-50%) scaleX(0.94);transform-origin:100% 50%;">24.43</span>
<span class="t" style="left:222px;top:8.0px;font-size:10.5px;color:#222;transform:translate(-100%,-50%) scaleX(0.94);transform-origin:100% 50%;">-2.94</span>
<span class="t" style="left:72.5px;top:23.25px;font-size:10.5px;color:#1f8b1f;transform:translate(-100%,-50%) scaleX(0.94);transform-origin:100% 50%;">13.40</span>
<span class="t" style="left:147.5px;top:23.25px;font-size:10.5px;color:#222;transform:translate(-100%,-50%) scaleX(0.94);transform-origin:100% 50%;">29.38</span>
<span class="t" style="left:222px;top:23.25px;font-size:10.5px;color:#222;transform:translate(-100%,-50%) scaleX(0.94);transform-origin:100% 50%;">-3.32</span>
<span class="t" style="left:72.5px;top:38.5px;font-size:10.5px;color:#1f8b1f;transform:translate(-100%,-50%) scaleX(0.94);transform-origin:100% 50%;">17.10</span>
<span class="t" style="left:147.5px;top:38.5px;font-size:10.5px;color:#222;transform:translate(-100%,-50%) scaleX(0.94);transform-origin:100% 50%;">34.55</span>
<span class="t" style="left:222px;top:38.5px;font-size:10.5px;color:#222;transform:translate(-100%,-50%) scaleX(0.94);transform-origin:100% 50%;">-3.65</span>
<span class="t" style="left:72.5px;top:53.75px;font-size:10.5px;color:#1f8b1f;transform:translate(-100%,-50%) scaleX(0.94);transform-origin:100% 50%;">21.40</span>
<span class="t" style="left:147.5px;top:53.75px;font-size:10.5px;color:#222;transform:translate(-100%,-50%) scaleX(0.94);transform-origin:100% 50%;">39.82</span>
<span class="t" style="left:222px;top:53.75px;font-size:10.5px;color:#222;transform:translate(-100%,-50%) scaleX(0.94);transform-origin:100% 50%;">-3.92</span>
<span class="t" style="left:72.5px;top:69.0px;font-size:10.5px;color:#1f8b1f;transform:translate(-100%,-50%) scaleX(0.94);transform-origin:100% 50%;">26.30</span>
<span class="t" style="left:147.5px;top:69.0px;font-size:10.5px;color:#222;transform:translate(-100%,-50%) scaleX(0.94);transform-origin:100% 50%;">45.06</span>
<span class="t" style="left:222px;top:69.0px;font-size:10.5px;color:#222;transform:translate(-100%,-50%) scaleX(0.94);transform-origin:100% 50%;">-4.14</span>
<span class="t" style="left:72.5px;top:84.25px;font-size:10.5px;color:#1f8b1f;transform:translate(-100%,-50%) scaleX(0.94);transform-origin:100% 50%;">31.75</span>
<span class="t" style="left:147.5px;top:84.25px;font-size:10.5px;color:#222;transform:translate(-100%,-50%) scaleX(0.94);transform-origin:100% 50%;">50.15</span>
<span class="t" style="left:222px;top:84.25px;font-size:10.5px;color:#222;transform:translate(-100%,-50%) scaleX(0.94);transform-origin:100% 50%;">-4.29</span>
<span class="t" style="left:72.5px;top:99.5px;font-size:10.5px;color:#1f8b1f;transform:translate(-100%,-50%) scaleX(0.94);transform-origin:100% 50%;">37.70</span>
<span class="t" style="left:147.5px;top:99.5px;font-size:10.5px;color:#222;transform:translate(-100%,-50%) scaleX(0.94);transform-origin:100% 50%;">55.02</span>
<span class="t" style="left:222px;top:99.5px;font-size:10.5px;color:#222;transform:translate(-100%,-50%) scaleX(0.94);transform-origin:100% 50%;">-4.39</span>
<span class="t" style="left:72.5px;top:114.75px;font-size:10.5px;color:#1f8b1f;transform:translate(-100%,-50%) scaleX(0.94);transform-origin:100% 50%;">44.15</span>
<span class="t" style="left:147.5px;top:114.75px;font-size:10.5px;color:#222;transform:translate(-100%,-50%) scaleX(0.94);transform-origin:100% 50%;">59.59</span>
<span class="t" style="left:222px;top:114.75px;font-size:10.5px;color:#222;transform:translate(-100%,-50%) scaleX(0.94);transform-origin:100% 50%;">-4.43</span>
</div>
<div class="r" style="left:489.5px;top:248px;width:14px;height:116.5px;background:#dcdcdc;border-left:1px solid #c6c6c6;"></div>
<div class="r" style="left:490.5px;top:294px;width:13px;height:12px;background:#c2c2c2;"></div>
<svg style="left:493.5px;top:253.5px" width="7" height="5" viewBox="0 0 7 5"><path d="M1 4 L3.5 1.2 L6 4" fill="none" stroke="#666" stroke-width="1.1"/></svg>
<svg style="left:493.5px;top:354.0px" width="7" height="5" viewBox="0 0 7 5"><path d="M1 1 L3.5 3.8 L6 1" fill="none" stroke="#666" stroke-width="1.1"/></svg>
<div class="r" style="left:489.5px;top:230.5px;width:14px;height:17.5px;background:#e5e5e5;border:1px solid #c6c6c6;"></div>
<div class="r" style="left:201.0px;top:368.5px;width:1.4px;height:1.4px;background:#7a7a7a;"></div>
<div class="r" style="left:203.4px;top:368.5px;width:1.4px;height:1.4px;background:#7a7a7a;"></div>
<div class="r" style="left:205.8px;top:368.5px;width:1.4px;height:1.4px;background:#7a7a7a;"></div>
<div class="r" style="left:208.2px;top:368.5px;width:1.4px;height:1.4px;background:#7a7a7a;"></div>
<div class="r" style="left:210.6px;top:368.5px;width:1.4px;height:1.4px;background:#7a7a7a;"></div>
<div class="r" style="left:-35px;top:374.5px;width:539px;height:213px;background:#fff;border:1px solid #c6c6c6;"></div>
<div class="r" style="left:-35px;top:374.5px;width:539px;height:17.5px;background:#e5e5e5;border:1px solid #c6c6c6;"></div>
<div class="r" style="left:39.5px;top:374.5px;width:1px;height:213px;background:#dedede;"></div>
<div class="r" style="left:114px;top:374.5px;width:1px;height:213px;background:#dedede;"></div>
<div class="r" style="left:188.9px;top:374.5px;width:1px;height:213px;background:#dedede;"></div>
<div class="r" style="left:263.9px;top:374.5px;width:1px;height:213px;background:#dedede;"></div>
<div class="r" style="left:338.8px;top:374.5px;width:1px;height:213px;background:#dedede;"></div>
<div class="r" style="left:413.3px;top:374.5px;width:1px;height:213px;background:#dedede;"></div>
<div class="r" style="left:489px;top:374.5px;width:1px;height:213px;background:#dedede;"></div>
<div class="r" style="left:39.5px;top:374.5px;width:1px;height:17.5px;background:#c6c6c6;"></div>
<div class="r" style="left:114px;top:374.5px;width:1px;height:17.5px;background:#c6c6c6;"></div>
<div class="r" style="left:188.9px;top:374.5px;width:1px;height:17.5px;background:#c6c6c6;"></div>
<div class="r" style="left:263.9px;top:374.5px;width:1px;height:17.5px;background:#c6c6c6;"></div>
<div class="r" style="left:338.8px;top:374.5px;width:1px;height:17.5px;background:#c6c6c6;"></div>
<div class="r" style="left:413.3px;top:374.5px;width:1px;height:17.5px;background:#c6c6c6;"></div>
<div class="r" style="left:489px;top:374.5px;width:1px;height:17.5px;background:#c6c6c6;"></div>
<span class="t" style="left:-5.5px;top:382.9px;font-size:10.5px;color:#444;transform:translate(0,-50%) scaleX(0.9);transform-origin:0 50%;">Mid</span>
<span class="t" style="left:77.25px;top:382.9px;font-size:10.5px;color:#444;transform:translate(-50%,-50%) scaleX(0.885);transform-origin:50% 50%;">Delta</span>
<span class="t" style="left:151.95px;top:382.9px;font-size:10.5px;color:#444;transform:translate(-50%,-50%) scaleX(0.9);transform-origin:50% 50%;">Theta</span>
<span class="t" style="left:226.89999999999998px;top:382.9px;font-size:10.5px;color:#444;transform:translate(-50%,-50%) scaleX(0.9);transform-origin:50% 50%;">OrigPrice</span>
<span class="t" style="left:301.85px;top:382.9px;font-size:10.5px;color:#444;transform:translate(-50%,-50%) scaleX(0.9);transform-origin:50% 50%;">IVChg</span>
<span class="t" style="left:376.55px;top:382.9px;font-size:10.5px;color:#444;transform:translate(-50%,-50%) scaleX(0.9);transform-origin:50% 50%;">Model</span>
<span class="t" style="left:451.65px;top:382.9px;font-size:10.5px;color:#444;transform:translate(-50%,-50%) scaleX(0.9);transform-origin:50% 50%;">Pos</span>
<div class="r" style="left:-35px;top:406.72px;width:524.5px;height:1px;background:#e0e0e0;"></div>
<div class="r" style="left:-35px;top:421.94px;width:524.5px;height:1px;background:#e0e0e0;"></div>
<div class="r" style="left:-35px;top:437.16px;width:524.5px;height:1px;background:#e0e0e0;"></div>
<div class="r" style="left:-35px;top:452.38px;width:524.5px;height:1px;background:#e0e0e0;"></div>
<div class="r" style="left:-35px;top:467.6px;width:524.5px;height:1px;background:#e0e0e0;"></div>
<div class="r" style="left:-35px;top:482.82px;width:524.5px;height:1px;background:#e0e0e0;"></div>
<div class="r" style="left:-35px;top:498.04px;width:524.5px;height:1px;background:#e0e0e0;"></div>
<div class="r" style="left:-35px;top:513.26px;width:524.5px;height:1px;background:#e0e0e0;"></div>
<div class="r" style="left:-35px;top:528.48px;width:524.5px;height:1px;background:#e0e0e0;"></div>
<div class="r" style="left:-35px;top:543.7px;width:524.5px;height:1px;background:#e0e0e0;"></div>
<div class="r" style="left:-35px;top:558.9200000000001px;width:524.5px;height:1px;background:#e0e0e0;"></div>
<div class="r" style="left:-35px;top:574.14px;width:524.5px;height:1px;background:#e0e0e0;"></div>
<div class="r" style="left:-35px;top:392px;width:525px;height:195px;overflow:hidden;">
<span class="t" style="left:72.5px;top:8.5px;font-size:10.5px;color:#222;transform:translate(-100%,-50%) scaleX(0.94);transform-origin:100% 50%;">1.125</span>
<span class="t" style="left:147.5px;top:8.5px;font-size:10.5px;color:#222;transform:translate(-100%,-50%) scaleX(0.94);transform-origin:100% 50%;">-2.05</span>
<span class="t" style="left:222px;top:8.5px;font-size:10.5px;color:#222;transform:translate(-100%,-50%) scaleX(0.94);transform-origin:100% 50%;">-0.90</span>
<span class="t" style="left:297px;top:8.5px;font-size:10.5px;color:#222;transform:translate(-100%,-50%) scaleX(0.94);transform-origin:100% 50%;">12.40</span>
<span class="t" style="left:371.5px;top:8.5px;font-size:10.5px;color:#222;transform:translate(-100%,-50%) scaleX(0.94);transform-origin:100% 50%;">12.25</span>
<span class="t" style="left:522px;top:8.5px;font-size:10.5px;color:#222;transform:translate(-100%,-50%) scaleX(0.94);transform-origin:100% 50%;">-3</span>
<span class="t" style="left:72.5px;top:23.72px;font-size:10.5px;color:#1f8b1f;transform:translate(-100%,-50%) scaleX(0.94);transform-origin:100% 50%;">1.10</span>
<span class="t" style="left:147.5px;top:23.72px;font-size:10.5px;color:#222;transform:translate(-100%,-50%) scaleX(0.94);transform-origin:100% 50%;">-1.96</span>
<span class="t" style="left:222px;top:23.72px;font-size:10.5px;color:#222;transform:translate(-100%,-50%) scaleX(0.94);transform-origin:100% 50%;">-0.89</span>
<span class="t" style="left:72.5px;top:38.94px;font-size:10.5px;color:#222;transform:translate(-100%,-50%) scaleX(0.94);transform-origin:100% 50%;">1.05</span>
<span class="t" style="left:147.5px;top:38.94px;font-size:10.5px;color:#222;transform:translate(-100%,-50%) scaleX(0.94);transform-origin:100% 50%;">-1.85</span>
<span class="t" style="left:222px;top:38.94px;font-size:10.5px;color:#222;transform:translate(-100%,-50%) scaleX(0.94);transform-origin:100% 50%;">-0.86</span>
<span class="t" style="left:72.5px;top:54.160000000000004px;font-size:10.5px;color:#1f8b1f;transform:translate(-100%,-50%) scaleX(0.94);transform-origin:100% 50%;">1.025</span>
<span class="t" style="left:147.5px;top:54.160000000000004px;font-size:10.5px;color:#222;transform:translate(-100%,-50%) scaleX(0.94);transform-origin:100% 50%;">-1.76</span>
<span class="t" style="left:222px;top:54.160000000000004px;font-size:10.5px;color:#222;transform:translate(-100%,-50%) scaleX(0.94);transform-origin:100% 50%;">-0.85</span>
<span class="t" style="left:297px;top:54.160000000000004px;font-size:10.5px;color:#222;transform:translate(-100%,-50%) scaleX(0.94);transform-origin:100% 50%;">10.60</span>
<span class="t" style="left:371.5px;top:54.160000000000004px;font-size:10.5px;color:#222;transform:translate(-100%,-50%) scaleX(0.94);transform-origin:100% 50%;">14.15</span>
<span class="t" style="left:522px;top:54.160000000000004px;font-size:10.5px;color:#222;transform:translate(-100%,-50%) scaleX(0.94);transform-origin:100% 50%;">+3</span>
<span class="t" style="left:72.5px;top:69.38px;font-size:10.5px;color:#222;transform:translate(-100%,-50%) scaleX(0.94);transform-origin:100% 50%;">0.975</span>
<span class="t" style="left:147.5px;top:69.38px;font-size:10.5px;color:#222;transform:translate(-100%,-50%) scaleX(0.94);transform-origin:100% 50%;">-1.66</span>
<span class="t" style="left:222px;top:69.38px;font-size:10.5px;color:#222;transform:translate(-100%,-50%) scaleX(0.94);transform-origin:100% 50%;">-0.83</span>
<span class="t" style="left:72.5px;top:84.60000000000001px;font-size:10.5px;color:#222;transform:translate(-100%,-50%) scaleX(0.94);transform-origin:100% 50%;">0.95</span>
<span class="t" style="left:147.5px;top:84.60000000000001px;font-size:10.5px;color:#222;transform:translate(-100%,-50%) scaleX(0.94);transform-origin:100% 50%;">-1.59</span>
<span class="t" style="left:222px;top:84.60000000000001px;font-size:10.5px;color:#222;transform:translate(-100%,-50%) scaleX(0.94);transform-origin:100% 50%;">-0.81</span>
<span class="t" style="left:72.5px;top:99.82000000000001px;font-size:10.5px;color:#222;transform:translate(-100%,-50%) scaleX(0.94);transform-origin:100% 50%;">0.925</span>
<span class="t" style="left:147.5px;top:99.82000000000001px;font-size:10.5px;color:#222;transform:translate(-100%,-50%) scaleX(0.94);transform-origin:100% 50%;">-1.52</span>
<span class="t" style="left:222px;top:99.82000000000001px;font-size:10.5px;color:#222;transform:translate(-100%,-50%) scaleX(0.94);transform-origin:100% 50%;">-0.80</span>
<span class="t" style="left:72.5px;top:115.04px;font-size:10.5px;color:#222;transform:translate(-100%,-50%) scaleX(0.94);transform-origin:100% 50%;">0.875</span>
<span class="t" style="left:147.5px;top:115.04px;font-size:10.5px;color:#222;transform:translate(-100%,-50%) scaleX(0.94);transform-origin:100% 50%;">-1.42</span>
<span class="t" style="left:222px;top:115.04px;font-size:10.5px;color:#222;transform:translate(-100%,-50%) scaleX(0.94);transform-origin:100% 50%;">-0.77</span>
<span class="t" style="left:72.5px;top:130.26px;font-size:10.5px;color:#1f8b1f;transform:translate(-100%,-50%) scaleX(0.94);transform-origin:100% 50%;">0.875</span>
<span class="t" style="left:147.5px;top:130.26px;font-size:10.5px;color:#222;transform:translate(-100%,-50%) scaleX(0.94);transform-origin:100% 50%;">-1.39</span>
<span class="t" style="left:222px;top:130.26px;font-size:10.5px;color:#222;transform:translate(-100%,-50%) scaleX(0.94);transform-origin:100% 50%;">-0.78</span>
<span class="t" style="left:72.5px;top:145.48000000000002px;font-size:10.5px;color:#222;transform:translate(-100%,-50%) scaleX(0.94);transform-origin:100% 50%;">0.825</span>
<span class="t" style="left:147.5px;top:145.48000000000002px;font-size:10.5px;color:#222;transform:translate(-100%,-50%) scaleX(0.94);transform-origin:100% 50%;">-1.30</span>
<span class="t" style="left:222px;top:145.48000000000002px;font-size:10.5px;color:#222;transform:translate(-100%,-50%) scaleX(0.94);transform-origin:100% 50%;">-0.74</span>
<span class="t" style="left:72.5px;top:160.70000000000002px;font-size:10.5px;color:#1f8b1f;transform:translate(-100%,-50%) scaleX(0.94);transform-origin:100% 50%;">0.825</span>
<span class="t" style="left:147.5px;top:160.70000000000002px;font-size:10.5px;color:#222;transform:translate(-100%,-50%) scaleX(0.94);transform-origin:100% 50%;">-1.27</span>
<span class="t" style="left:222px;top:160.70000000000002px;font-size:10.5px;color:#222;transform:translate(-100%,-50%) scaleX(0.94);transform-origin:100% 50%;">-0.75</span>
<span class="t" style="left:72.5px;top:175.92000000000002px;font-size:10.5px;color:#222;transform:translate(-100%,-50%) scaleX(0.94);transform-origin:100% 50%;">0.775</span>
<span class="t" style="left:147.5px;top:175.92000000000002px;font-size:10.5px;color:#222;transform:translate(-100%,-50%) scaleX(0.94);transform-origin:100% 50%;">-1.19</span>
<span class="t" style="left:222px;top:175.92000000000002px;font-size:10.5px;color:#222;transform:translate(-100%,-50%) scaleX(0.94);transform-origin:100% 50%;">-0.71</span>
<span class="t" style="left:72.5px;top:191.14000000000001px;font-size:10.5px;color:#222;transform:translate(-100%,-50%) scaleX(0.94);transform-origin:100% 50%;">0.775</span>
<span class="t" style="left:147.5px;top:191.14000000000001px;font-size:10.5px;color:#222;transform:translate(-100%,-50%) scaleX(0.94);transform-origin:100% 50%;">-1.16</span>
<span class="t" style="left:222px;top:191.14000000000001px;font-size:10.5px;color:#222;transform:translate(-100%,-50%) scaleX(0.94);transform-origin:100% 50%;">-0.72</span>
</div>
<div class="r" style="left:489.5px;top:392px;width:14px;height:195px;background:#dcdcdc;border-left:1px solid #c6c6c6;"></div>
<div class="r" style="left:490.5px;top:492.8px;width:13px;height:13.5px;background:#c2c2c2;"></div>
<svg style="left:493.5px;top:397.5px" width="7" height="5" viewBox="0 0 7 5"><path d="M1 4 L3.5 1.2 L6 4" fill="none" stroke="#666" stroke-width="1.1"/></svg>
<svg style="left:493.5px;top:576.5px" width="7" height="5" viewBox="0 0 7 5"><path d="M1 1 L3.5 3.8 L6 1" fill="none" stroke="#666" stroke-width="1.1"/></svg>
<div class="r" style="left:489.5px;top:374.5px;width:14px;height:17.5px;background:#e5e5e5;border:1px solid #c6c6c6;"></div>
<div class="r" style="left:509px;top:401.0px;width:1.2px;height:1.2px;background:#777;"></div>
<div class="r" style="left:509px;top:403.5px;width:1.2px;height:1.2px;background:#777;"></div>
<div class="r" style="left:509px;top:406.0px;width:1.2px;height:1.2px;background:#777;"></div>
<div class="r" style="left:201.0px;top:592px;width:1.4px;height:1.4px;background:#7a7a7a;"></div>
<div class="r" style="left:203.4px;top:592px;width:1.4px;height:1.4px;background:#7a7a7a;"></div>
<div class="r" style="left:205.8px;top:592px;width:1.4px;height:1.4px;background:#7a7a7a;"></div>
<div class="r" style="left:208.2px;top:592px;width:1.4px;height:1.4px;background:#7a7a7a;"></div>
<div class="r" style="left:210.6px;top:592px;width:1.4px;height:1.4px;background:#7a7a7a;"></div>
<div class="r" style="left:-20px;top:599px;width:127.5px;height:16px;background:#fff;border:1px solid #b9b9b9;"></div>
<div class="r" style="left:94.5px;top:600px;width:12px;height:14px;background:#efefef;border-left:1px solid #c9c9c9;"></div>
<svg style="left:97.5px;top:605px" width="7" height="5" viewBox="0 0 7 5"><path d="M1 1 L3.5 3.8 L6 1" fill="none" stroke="#555" stroke-width="1.1"/></svg>
<span class="t" style="left:-1px;top:606.9px;font-size:10.5px;color:#333;transform:translate(0,-50%) scaleX(0.9);transform-origin:0 50%;">mbined</span>
<div class="r" style="left:114.5px;top:599px;width:65.5px;height:16px;background:#fff;border:1px solid #b9b9b9;"></div>
<div class="r" style="left:167px;top:600px;width:12px;height:14px;background:#efefef;border-left:1px solid #c9c9c9;"></div>
<svg style="left:170px;top:605px" width="7" height="5" viewBox="0 0 7 5"><path d="M1 1 L3.5 3.8 L6 1" fill="none" stroke="#555" stroke-width="1.1"/></svg>
<span class="t" style="left:118px;top:606.9px;font-size:10.5px;color:#333;transform:translate(0,-50%) scaleX(0.9);transform-origin:0 50%;">All</span>
<div class="r" style="left:390.2px;top:602.5px;width:8.6px;height:8.6px;background:#fff;border:1px solid #b0b0b0;"></div>
<span class="t" style="left:402.5px;top:606.4px;font-size:10.5px;color:#333;transform:translate(0,-50%) scaleX(0.968);transform-origin:0 50%;">Ignore Today's Trades</span>
<div class="r" style="left:-10px;top:618px;width:514.5px;height:48px;background:#fff;border:1px solid #c6c6c6;"></div>
<div class="r" style="left:-10px;top:618px;width:514.5px;height:17.5px;background:#e5e5e5;border:1px solid #c6c6c6;"></div>
<div class="r" style="left:-10px;top:618px;width:13px;height:48px;background:#dcdcdc;border:1px solid #c6c6c6;"></div>
<div class="r" style="left:45.7px;top:618px;width:1px;height:48px;background:#d0d0d0;"></div>
<div class="r" style="left:91.7px;top:618px;width:1px;height:48px;background:#d0d0d0;"></div>
<div class="r" style="left:137.4px;top:618px;width:1px;height:48px;background:#d0d0d0;"></div>
<div class="r" style="left:182.9px;top:618px;width:1px;height:48px;background:#d0d0d0;"></div>
<div class="r" style="left:228.7px;top:618px;width:1px;height:48px;background:#d0d0d0;"></div>
<div class="r" style="left:274.4px;top:618px;width:1px;height:48px;background:#d0d0d0;"></div>
<div class="r" style="left:320.1px;top:618px;width:1px;height:48px;background:#d0d0d0;"></div>
<div class="r" style="left:365.8px;top:618px;width:1px;height:48px;background:#d0d0d0;"></div>
<div class="r" style="left:411.5px;top:618px;width:1px;height:48px;background:#d0d0d0;"></div>
<div class="r" style="left:457px;top:618px;width:1px;height:48px;background:#d0d0d0;"></div>
<div class="r" style="left:-10px;top:650.2px;width:514.5px;height:1px;background:#d9d9d9;"></div>
<span class="t" style="left:24.6px;top:626.4px;font-size:10.5px;color:#444;transform:translate(-50%,-50%) scaleX(0.9);transform-origin:50% 50%;">Cost</span>
<span class="t" style="left:69.2px;top:626.4px;font-size:10.5px;color:#444;transform:translate(-50%,-50%) scaleX(0.9);transform-origin:50% 50%;">Curr C...</span>
<span class="t" style="left:115.05000000000001px;top:626.4px;font-size:10.5px;color:#444;transform:translate(-50%,-50%) scaleX(0.9);transform-origin:50% 50%;">Commi...</span>
<span class="t" style="left:160.65px;top:626.4px;font-size:10.5px;color:#444;transform:translate(-50%,-50%) scaleX(0.9);transform-origin:50% 50%;">PnL</span>
<span class="t" style="left:206.3px;top:626.4px;font-size:10.5px;color:#444;transform:translate(-50%,-50%) scaleX(0.9);transform-origin:50% 50%;">PnL%</span>
<span class="t" style="left:252.04999999999998px;top:626.4px;font-size:10.5px;color:#444;transform:translate(-50%,-50%) scaleX(0.885);transform-origin:50% 50%;">Delta</span>
<span class="t" style="left:297.75px;top:626.4px;font-size:10.5px;color:#444;transform:translate(-50%,-50%) scaleX(0.9);transform-origin:50% 50%;">Gamma</span>
<span class="t" style="left:343.45000000000005px;top:626.4px;font-size:10.5px;color:#444;transform:translate(-50%,-50%) scaleX(0.9);transform-origin:50% 50%;">Theta</span>
<span class="t" style="left:389.15px;top:626.4px;font-size:10.5px;color:#444;transform:translate(-50%,-50%) scaleX(0.9);transform-origin:50% 50%;">Vega</span>
<span class="t" style="left:434.75px;top:626.4px;font-size:10.5px;color:#444;transform:translate(-50%,-50%) scaleX(0.9);transform-origin:50% 50%;">T/D</span>
<span class="t" style="left:480.75px;top:626.4px;font-size:10.5px;color:#444;transform:translate(-50%,-50%) scaleX(0.9);transform-origin:50% 50%;">Plot</span>
<span class="t" style="left:43.7px;top:642.9px;font-size:10.5px;color:#333;transform:translate(-100%,-50%) scaleX(0.94);transform-origin:100% 50%;">535.80</span>
<span class="t" style="left:89.7px;top:642.9px;font-size:10.5px;color:#333;transform:translate(-100%,-50%) scaleX(0.94);transform-origin:100% 50%;">-30.00</span>
<span class="t" style="left:135.4px;top:642.9px;font-size:10.5px;color:#333;transform:translate(-100%,-50%) scaleX(0.94);transform-origin:100% 50%;">4.20</span>
<span class="t" style="left:180.9px;top:642.9px;font-size:10.5px;color:#1f8b1f;transform:translate(-100%,-50%) scaleX(0.94);transform-origin:100% 50%;">505.80</span>
<span class="t" style="left:226.7px;top:642.9px;font-size:10.5px;color:#1f8b1f;transform:translate(-100%,-50%) scaleX(0.94);transform-origin:100% 50%;">5.98%</span>
<span class="t" style="left:272.4px;top:642.9px;font-size:10.5px;color:#333;transform:translate(-100%,-50%) scaleX(0.94);transform-origin:100% 50%;">0.85</span>
<span class="t" style="left:318.1px;top:642.9px;font-size:10.5px;color:#333;transform:translate(-100%,-50%) scaleX(0.94);transform-origin:100% 50%;">-0.02</span>
<span class="t" style="left:363.8px;top:642.9px;font-size:10.5px;color:#333;transform:translate(-100%,-50%) scaleX(0.94);transform-origin:100% 50%;">13.65</span>
<span class="t" style="left:409.5px;top:642.9px;font-size:10.5px;color:#333;transform:translate(-100%,-50%) scaleX(0.94);transform-origin:100% 50%;">-8.05</span>
<span class="t" style="left:455px;top:642.9px;font-size:10.5px;color:#333;transform:translate(-100%,-50%) scaleX(0.94);transform-origin:100% 50%;">16.1</span>
<span class="t" style="left:272.4px;top:658.0px;font-size:10.5px;color:#333;transform:translate(-100%,-50%) scaleX(0.94);transform-origin:100% 50%;">0.00</span>
<span class="t" style="left:318.1px;top:658.0px;font-size:10.5px;color:#333;transform:translate(-100%,-50%) scaleX(0.94);transform-origin:100% 50%;">0.00</span>
<span class="t" style="left:363.8px;top:658.0px;font-size:10.5px;color:#333;transform:translate(-100%,-50%) scaleX(0.94);transform-origin:100% 50%;">0.00</span>
<span class="t" style="left:409.5px;top:658.0px;font-size:10.5px;color:#333;transform:translate(-100%,-50%) scaleX(0.94);transform-origin:100% 50%;">0.00</span>
<span class="t" style="left:455px;top:658.0px;font-size:10.5px;color:#333;transform:translate(-100%,-50%) scaleX(0.94);transform-origin:100% 50%;">0</span>
<div class="r" style="left:476.5px;top:639.2px;width:8px;height:8px;background:#fff;border:1px solid #9a9a9a;"></div>
<svg style="left:477.5px;top:640.2px" width="6" height="6" viewBox="0 0 6 6"><path d="M0.8 3 L2.4 4.8 L5.4 0.9" fill="none" stroke="#2a2a2a" stroke-width="1.3"/></svg>
<div class="r" style="left:476.5px;top:654.6px;width:8px;height:8px;background:#fff;border:1px solid #9a9a9a;"></div>
<svg style="left:477.5px;top:655.6px" width="6" height="6" viewBox="0 0 6 6"><path d="M0.8 3 L2.4 4.8 L5.4 0.9" fill="none" stroke="#2a2a2a" stroke-width="1.3"/></svg>
<div class="r" style="left:0px;top:666.3px;width:1080px;height:4.6px;background:#c6c6c6;"></div>
<div class="r" style="left:0px;top:670.8px;width:1080px;height:1.6px;background:#e4e4e4;"></div>
<div class="r" style="left:0px;top:672.3px;width:1080px;height:1.5px;background:#3e3e3e;"></div>
<div class="r" style="left:0px;top:673.7px;width:1080px;height:1.5px;background:#ececec;"></div>
<div class="r" style="left:0px;top:673.7px;width:12px;height:1.5px;background:#333;"></div>
<div class="r" style="left:516px;top:144.9px;width:564px;height:42px;background:#e6e6e6;"></div>
<div class="r" style="left:516px;top:164.3px;width:564px;height:22px;background:#e6e6e6;"></div>
<div class="r" style="left:578px;top:146px;width:63.5px;height:18.5px;background:#e6e6e6;border:1px solid #c2c2c2;border-bottom:none;box-shadow:inset 0 1px 0 #eee;"></div>
<span class="t" style="left:609.75px;top:155.9px;font-size:10.5px;color:#3a3a3a;transform:translate(-50%,-50%) scaleX(0.88);transform-origin:50% 50%;">Price Chart</span>
<div class="r" style="left:642.5px;top:146px;width:100.5px;height:18.5px;background:#e6e6e6;border:1px solid #c2c2c2;border-bottom:none;box-shadow:inset 0 1px 0 #eee;"></div>
<span class="t" style="left:692.75px;top:155.9px;font-size:10.5px;color:#3a3a3a;transform:translate(-50%,-50%) scaleX(0.92);transform-origin:50% 50%;">Movement Analysis</span>
<div class="r" style="left:744px;top:146px;width:51.5px;height:18.5px;background:#e6e6e6;border:1px solid #c2c2c2;border-bottom:none;box-shadow:inset 0 1px 0 #eee;"></div>
<span class="t" style="left:769.75px;top:155.9px;font-size:10.5px;color:#3a3a3a;transform:translate(-50%,-50%) scaleX(0.9);transform-origin:50% 50%;">Volatility</span>
<div class="r" style="left:797px;top:146px;width:127.5px;height:18.5px;background:#e6e6e6;border:1px solid #c2c2c2;border-bottom:none;box-shadow:inset 0 1px 0 #eee;"></div>
<span class="t" style="left:860.75px;top:155.9px;font-size:10.5px;color:#3a3a3a;transform:translate(-50%,-50%) scaleX(0.915);transform-origin:50% 50%;">Statistics &amp; Fundamentals</span>
<div class="r" style="left:516px;top:144.2px;width:61.8px;height:21.3px;background:#e6e6e6;border:1px solid #c2c2c2;border-bottom:none;border-left:none;"></div>
<span class="t" style="left:546.5px;top:155.4px;font-size:10.5px;color:#3a3a3a;transform:translate(-50%,-50%) scaleX(0.87);transform-origin:50% 50%;">Risk Chart</span>
<div class="r" style="left:577.3px;top:164px;width:503px;height:1px;background:#c2c2c2;"></div>
<span class="t" style="left:520px;top:174.9px;font-size:10.5px;color:#3a3a3a;transform:translate(0,-50%) scaleX(0.935);transform-origin:0 50%;">Vol Adjust</span>
<div class="r" style="left:567px;top:167.3px;width:43.8px;height:16px;background:#fff;border:1px solid #bcbcbc;"></div>
<div class="r" style="left:597.3px;top:168.3px;width:12.5px;height:14px;background:#eeeeee;border-left:1px solid #d0d0d0;"></div>
<svg style="left:600.5px;top:170.5px" width="6" height="10" viewBox="0 0 6 10"><path d="M1 3.4 L3 1.4 L5 3.4 M1 6.6 L3 8.6 L5 6.6" fill="none" stroke="#4a4a4a" stroke-width="1.3"/></svg>
<span class="t" style="left:594.5px;top:174.9px;font-size:10.5px;color:#222;transform:translate(-100%,-50%) scaleX(0.94);transform-origin:100% 50%;">0</span>
<span class="t" style="left:1015px;top:175.4px;font-size:10.5px;color:#3a3a3a;transform:translate(-100%,-50%) scaleX(0.885);transform-origin:100% 50%;">Projection</span>
<div class="r" style="left:1019.5px;top:167.5px;width:70px;height:16.5px;background:#fff;border:1px solid #bcbcbc;"></div>
<span class="t" style="left:1023px;top:175.4px;font-size:11px;color:#222;transform:translate(0,-50%) scaleX(0.9);transform-origin:0 50%;">16/10/2023</span>
<div class="r" style="left:516px;top:186px;width:564px;height:460.5px;background:#fff;"></div>
<svg style="left:0;top:0" width="1080" height="675" viewBox="0 0 1080 675">
<rect x="716.9" y="200.8" width="153.8" height="271.3" fill="#92cddc"/>
<rect x="755" y="200.8" width="77.5" height="271.3" fill="#4f81bd"/>
<line x1="561.5" x2="1080" y1="200.80" y2="200.80" stroke="rgba(205,205,205,0.43)" stroke-width="1"/>
<line x1="561.5" x2="1080" y1="220.18" y2="220.18" stroke="rgba(205,205,205,0.43)" stroke-width="1"/>
<line x1="561.5" x2="1080" y1="239.56" y2="239.56" stroke="rgba(205,205,205,0.43)" stroke-width="1"/>
<line x1="561.5" x2="1080" y1="258.94" y2="258.94" stroke="rgba(205,205,205,0.43)" stroke-width="1"/>
<line x1="561.5" x2="1080" y1="278.31" y2="278.31" stroke="rgba(205,205,205,0.43)" stroke-width="1"/>
<line x1="561.5" x2="1080" y1="297.69" y2="297.69" stroke="rgba(205,205,205,0.43)" stroke-width="1"/>
<line x1="561.5" x2="1080" y1="317.07" y2="317.07" stroke="rgba(205,205,205,0.43)" stroke-width="1"/>
<line x1="561.5" x2="1080" y1="336.45" y2="336.45" stroke="rgba(205,205,205,0.43)" stroke-width="1"/>
<line x1="561.5" x2="1080" y1="355.83" y2="355.83" stroke="rgba(205,205,205,0.43)" stroke-width="1"/>
<line x1="561.5" x2="1080" y1="375.21" y2="375.21" stroke="rgba(205,205,205,0.43)" stroke-width="1"/>
<line x1="561.5" x2="1080" y1="394.59" y2="394.59" stroke="rgba(205,205,205,0.43)" stroke-width="1"/>
<line x1="561.5" x2="1080" y1="413.96" y2="413.96" stroke="rgba(205,205,205,0.43)" stroke-width="1"/>
<line x1="561.5" x2="1080" y1="433.34" y2="433.34" stroke="rgba(205,205,205,0.43)" stroke-width="1"/>
<line x1="561.5" x2="1080" y1="452.72" y2="452.72" stroke="rgba(205,205,205,0.43)" stroke-width="1"/>
<line x1="561.5" x2="1080" y1="472.10" y2="472.10" stroke="rgba(205,205,205,0.43)" stroke-width="1"/>
<line x1="610.00" x2="610.00" y1="200.8" y2="474.1" stroke="rgba(205,205,205,0.43)" stroke-width="1"/>
<line x1="661.75" x2="661.75" y1="200.8" y2="474.1" stroke="rgba(205,205,205,0.43)" stroke-width="1"/>
<line x1="713.50" x2="713.50" y1="200.8" y2="474.1" stroke="rgba(205,205,205,0.43)" stroke-width="1"/>
<line x1="765.25" x2="765.25" y1="200.8" y2="474.1" stroke="rgba(205,205,205,0.43)" stroke-width="1"/>
<line x1="817.00" x2="817.00" y1="200.8" y2="474.1" stroke="rgba(205,205,205,0.43)" stroke-width="1"/>
<line x1="868.75" x2="868.75" y1="200.8" y2="474.1" stroke="rgba(205,205,205,0.43)" stroke-width="1"/>
<line x1="920.50" x2="920.50" y1="200.8" y2="474.1" stroke="rgba(205,205,205,0.43)" stroke-width="1"/>
<line x1="972.25" x2="972.25" y1="200.8" y2="474.1" stroke="rgba(205,205,205,0.43)" stroke-width="1"/>
<line x1="1024.00" x2="1024.00" y1="200.8" y2="474.1" stroke="rgba(205,205,205,0.43)" stroke-width="1"/>
<line x1="1075.75" x2="1075.75" y1="200.8" y2="474.1" stroke="rgba(205,205,205,0.43)" stroke-width="1"/>
<line x1="765.25" x2="765.25" y1="200.8" y2="472.1" stroke="rgba(255,255,255,0.45)" stroke-width="1"/>
<line x1="817.00" x2="817.00" y1="200.8" y2="472.1" stroke="rgba(255,255,255,0.45)" stroke-width="1"/>
<line x1="868.75" x2="868.75" y1="200.8" y2="472.1" stroke="rgba(255,255,255,0.45)" stroke-width="1"/>
<line x1="716.9" x2="870.7" y1="200.80" y2="200.80" stroke="rgba(255,255,255,0.3)" stroke-width="1"/>
<line x1="716.9" x2="870.7" y1="220.18" y2="220.18" stroke="rgba(255,255,255,0.3)" stroke-width="1"/>
<line x1="716.9" x2="870.7" y1="239.56" y2="239.56" stroke="rgba(255,255,255,0.3)" stroke-width="1"/>
<line x1="716.9" x2="870.7" y1="258.94" y2="258.94" stroke="rgba(255,255,255,0.3)" stroke-width="1"/>
<line x1="716.9" x2="870.7" y1="278.31" y2="278.31" stroke="rgba(255,255,255,0.3)" stroke-width="1"/>
<line x1="716.9" x2="870.7" y1="297.69" y2="297.69" stroke="rgba(255,255,255,0.3)" stroke-width="1"/>
<line x1="716.9" x2="870.7" y1="317.07" y2="317.07" stroke="rgba(255,255,255,0.3)" stroke-width="1"/>
<line x1="716.9" x2="870.7" y1="336.45" y2="336.45" stroke="rgba(255,255,255,0.3)" stroke-width="1"/>
<line x1="716.9" x2="870.7" y1="355.83" y2="355.83" stroke="rgba(255,255,255,0.3)" stroke-width="1"/>
<line x1="716.9" x2="870.7" y1="375.21" y2="375.21" stroke="rgba(255,255,255,0.3)" stroke-width="1"/>
<line x1="716.9" x2="870.7" y1="394.59" y2="394.59" stroke="rgba(255,255,255,0.3)" stroke-width="1"/>
<line x1="716.9" x2="870.7" y1="413.96" y2="413.96" stroke="rgba(255,255,255,0.3)" stroke-width="1"/>
<line x1="716.9" x2="870.7" y1="433.34" y2="433.34" stroke="rgba(255,255,255,0.3)" stroke-width="1"/>
<line x1="716.9" x2="870.7" y1="452.72" y2="452.72" stroke="rgba(255,255,255,0.3)" stroke-width="1"/>
<line x1="716.9" x2="870.7" y1="472.10" y2="472.10" stroke="rgba(255,255,255,0.3)" stroke-width="1"/>
<line x1="561.5" x2="561.5" y1="200.8" y2="474.1" stroke="#cfcfcf" stroke-width="1"/>
<line x1="559.0" x2="561.5" y1="200.80" y2="200.80" stroke="#cfcfcf" stroke-width="1"/>
<line x1="559.0" x2="561.5" y1="220.18" y2="220.18" stroke="#cfcfcf" stroke-width="1"/>
<line x1="559.0" x2="561.5" y1="239.56" y2="239.56" stroke="#cfcfcf" stroke-width="1"/>
<line x1="559.0" x2="561.5" y1="258.94" y2="258.94" stroke="#cfcfcf" stroke-width="1"/>
<line x1="559.0" x2="561.5" y1="278.31" y2="278.31" stroke="#cfcfcf" stroke-width="1"/>
<line x1="559.0" x2="561.5" y1="297.69" y2="297.69" stroke="#cfcfcf" stroke-width="1"/>
<line x1="559.0" x2="561.5" y1="317.07" y2="317.07" stroke="#cfcfcf" stroke-width="1"/>
<line x1="559.0" x2="561.5" y1="336.45" y2="336.45" stroke="#cfcfcf" stroke-width="1"/>
<line x1="559.0" x2="561.5" y1="355.83" y2="355.83" stroke="#cfcfcf" stroke-width="1"/>
<line x1="559.0" x2="561.5" y1="375.21" y2="375.21" stroke="#cfcfcf" stroke-width="1"/>
<line x1="559.0" x2="561.5" y1="394.59" y2="394.59" stroke="#cfcfcf" stroke-width="1"/>
<line x1="559.0" x2="561.5" y1="413.96" y2="413.96" stroke="#cfcfcf" stroke-width="1"/>
<line x1="559.0" x2="561.5" y1="433.34" y2="433.34" stroke="#cfcfcf" stroke-width="1"/>
<line x1="559.0" x2="561.5" y1="452.72" y2="452.72" stroke="#cfcfcf" stroke-width="1"/>
<line x1="559.0" x2="561.5" y1="472.10" y2="472.10" stroke="#cfcfcf" stroke-width="1"/>
<line x1="561.5" x2="1080" y1="259.4" y2="259.4" stroke="#707070" stroke-width="1.35"/>
<path d="M561.4 454.00 L563.4 446.59 L565.4 439.12 L567.4 431.65 L569.4 424.21 L571.4 416.86 L573.4 409.64 L575.4 402.59 L577.4 395.63 L579.4 388.76 L581.4 382.01 L583.4 375.40 L585.4 368.94 L587.4 362.67 L589.4 356.60 L591.4 350.64 L593.4 344.70 L595.4 338.72 L597.4 333.08 L599.4 327.65 L601.4 322.32 L603.4 317.15 L605.4 312.18 L607.4 307.44 L609.4 302.98 L611.4 298.78 L613.4 294.71 L615.4 290.74 L617.4 286.89 L619.4 283.15 L621.4 279.52 L623.4 276.01 L625.4 272.62 L627.4 269.35 L629.4 266.19 L631.4 263.16 L633.4 260.25 L635.4 257.46 L637.4 254.78 L639.4 252.21 L641.4 249.76 L643.4 247.44 L645.4 245.25 L647.4 243.19 L649.4 241.26 L651.4 239.40 L653.4 237.63 L655.4 235.92 L657.4 234.29 L659.4 232.73 L661.4 231.23 L663.4 229.80 L665.4 228.43 L667.4 227.11 L669.4 225.81 L671.4 224.55 L673.4 223.33 L675.4 222.17 L677.4 221.07 L679.4 220.05 L681.4 219.11 L683.4 218.26 L685.4 217.48 L687.4 216.74 L689.4 216.04 L691.4 215.39 L693.4 214.77 L695.4 214.19 L697.4 213.66 L699.4 213.17 L701.4 212.71 L703.4 212.29 L705.4 211.88 L707.4 211.50 L709.4 211.14 L711.4 210.82 L713.4 210.52 L715.4 210.25 L717.4 210.02 L719.4 209.81 L721.4 209.60 L723.4 209.41 L725.4 209.22 L727.4 209.05 L729.4 208.89 L731.4 208.74 L733.4 208.61 L735.4 208.48 L737.4 208.37 L739.4 208.28 L741.4 208.19 L743.4 208.10 L745.4 208.02 L747.4 207.95 L749.4 207.88 L751.4 207.81 L753.4 207.76 L755.4 207.70 L757.4 207.65 L759.4 207.61 L761.4 207.57 L763.4 207.54 L765.4 207.50 L767.4 207.47 L769.4 207.43 L771.4 207.40 L773.4 207.37 L775.4 207.34 L777.4 207.32 L779.4 207.29 L781.4 207.26 L783.4 207.24 L785.4 207.22 L787.4 207.20 L789.4 207.18 L791.4 207.16 L793.4 207.14 L795.4 207.13 L797.4 207.12 L799.4 207.10 L801.4 207.09 L803.4 207.08 L805.4 207.07 L807.4 207.06 L809.4 207.05 L811.4 207.05 L813.4 207.04 L815.4 207.03 L817.4 207.02 L819.4 207.02 L821.4 207.01 L823.4 207.00 L825.4 207.00 L827.4 206.99 L829.4 206.99 L831.4 206.98 L833.4 206.97 L835.4 206.97 L837.4 206.96 L839.4 206.96 L841.4 206.95 L843.4 206.95 L845.4 206.94 L847.4 206.94 L849.4 206.93 L851.4 206.93 L853.4 206.92 L855.4 206.91 L857.4 206.91 L859.4 206.90 L860.0 206.90" fill="none" stroke="#b9b84a" stroke-width="0.95"/>
<path d="M561.4 464.00 L563.4 458.69 L565.4 453.34 L567.4 447.97 L569.4 442.59 L571.4 437.22 L573.4 431.86 L575.4 426.54 L577.4 421.26 L579.4 416.05 L581.4 410.90 L583.4 405.85 L585.4 400.88 L587.4 395.98 L589.4 391.15 L591.4 386.40 L593.4 381.72 L595.4 377.11 L597.4 372.60 L599.4 368.18 L601.4 363.82 L603.4 359.48 L605.4 355.14 L607.4 350.77 L609.4 346.34 L611.4 341.76 L613.4 337.13 L615.4 332.99 L617.4 329.05 L619.4 325.21 L621.4 321.48 L623.4 317.85 L625.4 314.31 L627.4 310.87 L629.4 307.52 L631.4 304.26 L633.4 301.09 L635.4 298.01 L637.4 295.00 L639.4 292.08 L641.4 289.22 L643.4 286.42 L645.4 283.69 L647.4 281.02 L649.4 278.41 L651.4 275.86 L653.4 273.37 L655.4 270.94 L657.4 268.56 L659.4 266.24 L661.4 263.98 L663.4 261.77 L665.4 259.61 L667.4 257.50 L669.4 255.44 L671.4 253.43 L673.4 251.47 L675.4 249.57 L677.4 247.74 L679.4 245.98 L681.4 244.31 L683.4 242.72 L685.4 241.19 L687.4 239.70 L689.4 238.25 L691.4 236.84 L693.4 235.47 L695.4 234.16 L697.4 232.89 L699.4 231.68 L701.4 230.52 L703.4 229.43 L705.4 228.40 L707.4 227.42 L709.4 226.47 L711.4 225.56 L713.4 224.67 L715.4 223.83 L717.4 223.01 L719.4 222.24 L721.4 221.50 L723.4 220.80 L725.4 220.14 L727.4 219.52 L729.4 218.93 L731.4 218.37 L733.4 217.83 L735.4 217.31 L737.4 216.81 L739.4 216.33 L741.4 215.88 L743.4 215.45 L745.4 215.04 L747.4 214.66 L749.4 214.30 L751.4 213.96 L753.4 213.64 L755.4 213.32 L757.4 213.01 L759.4 212.71 L761.4 212.42 L763.4 212.14 L765.4 211.87 L767.4 211.61 L769.4 211.37 L771.4 211.14 L773.4 210.92 L775.4 210.72 L777.4 210.53 L779.4 210.35 L781.4 210.19 L783.4 210.03 L785.4 209.88 L787.4 209.73 L789.4 209.59 L791.4 209.46 L793.4 209.33 L795.4 209.20 L797.4 209.09 L799.4 208.98 L801.4 208.87 L803.4 208.78 L805.4 208.68 L807.4 208.60 L809.4 208.52 L811.4 208.45 L813.4 208.38 L815.4 208.31 L817.4 208.25 L819.4 208.18 L821.4 208.12 L823.4 208.06 L825.4 208.01 L827.4 207.95 L829.4 207.90 L831.4 207.86 L833.4 207.81 L835.4 207.77 L837.4 207.73 L839.4 207.69 L841.4 207.65 L843.4 207.62 L845.4 207.59 L847.4 207.57 L849.4 207.54 L851.4 207.52 L853.4 207.49 L855.4 207.47 L857.4 207.45 L859.4 207.43 L861.4 207.41 L863.4 207.39 L865.4 207.38 L867.4 207.36 L869.4 207.34 L871.4 207.33 L873.4 207.31 L875.4 207.29 L877.4 207.28 L879.4 207.26 L881.4 207.25 L883.4 207.23 L885.4 207.22 L887.4 207.20 L889.4 207.19 L891.4 207.17 L893.4 207.16 L895.4 207.14 L897.4 207.12 L899.4 207.11 L900.0 207.10" fill="none" stroke="#9a9a9a" stroke-width="0.95"/>
<path d="M625.4 340.09 L627.4 337.11 L629.4 334.31 L631.4 331.59 L633.4 328.89 L635.4 326.22 L637.4 323.58 L639.4 320.97 L641.4 318.39 L643.4 315.85 L645.4 313.34 L647.4 310.86 L649.4 308.43 L651.4 306.03 L653.4 303.67 L655.4 301.36 L657.4 299.09 L659.4 296.86 L661.4 294.68 L663.4 292.53 L665.4 290.41 L667.4 288.32 L669.4 286.25 L671.4 284.21 L673.4 282.21 L675.4 280.22 L677.4 278.27 L679.4 276.34 L681.4 274.45 L683.4 272.57 L685.4 270.73 L687.4 268.91 L689.4 267.12 L691.4 265.36 L693.4 263.62 L695.4 261.91 L697.4 260.23 L699.4 258.58 L701.4 256.95 L703.4 255.36 L705.4 253.80 L707.4 252.27 L709.4 250.78 L711.4 249.34 L713.4 247.93 L715.4 246.56 L717.4 245.24 L719.4 243.95 L721.4 242.68 L723.4 241.44 L725.4 240.22 L727.4 239.03 L729.4 237.87 L731.4 236.75 L733.4 235.65 L735.4 234.58 L737.4 233.55 L739.4 232.55 L741.4 231.58 L743.4 230.63 L745.4 229.73 L747.4 228.89 L749.4 228.11 L751.4 227.41 L753.4 226.74 L755.4 226.09 L757.4 225.47 L759.4 224.87 L761.4 224.28 L763.4 223.72 L765.4 223.17 L767.4 222.64 L769.4 222.13 L771.4 221.63 L773.4 221.15 L775.4 220.67 L777.4 220.21 L779.4 219.76 L781.4 219.31 L783.4 218.88 L785.4 218.45 L787.4 218.03 L789.4 217.62 L791.4 217.22 L793.4 216.83 L795.4 216.45 L797.4 216.08 L799.4 215.72 L801.4 215.38 L803.4 215.04 L805.4 214.71 L807.4 214.39 L809.4 214.09 L811.4 213.79 L813.4 213.49 L815.4 213.20 L817.4 212.90 L819.4 212.61 L821.4 212.32 L823.4 212.04 L825.4 211.77 L827.4 211.50 L829.4 211.25 L831.4 211.00 L833.4 210.77 L835.4 210.56 L837.4 210.36 L839.4 210.18 L841.4 210.01 L843.4 209.87 L845.4 209.75 L847.4 209.63 L849.4 209.51 L851.4 209.40 L853.4 209.30 L855.4 209.19 L857.4 209.09 L859.4 208.99 L861.4 208.90 L863.4 208.81 L865.4 208.72 L867.4 208.64 L869.4 208.55 L871.4 208.48 L873.4 208.40 L875.4 208.33 L877.4 208.26 L879.4 208.19 L881.4 208.13 L883.4 208.07 L885.4 208.02 L887.4 207.96 L889.4 207.91 L891.4 207.87 L893.4 207.82 L895.4 207.78 L897.4 207.74 L899.4 207.71 L901.4 207.68 L903.4 207.65 L905.4 207.62 L907.4 207.59 L909.4 207.56 L911.4 207.53 L913.4 207.51 L915.4 207.48 L917.4 207.46 L919.4 207.43 L921.4 207.41 L923.4 207.39 L925.4 207.36 L927.4 207.34 L929.4 207.32 L931.4 207.30 L933.4 207.29 L935.4 207.27 L937.4 207.25 L939.4 207.23 L941.4 207.22 L943.4 207.20 L945.4 207.19 L947.4 207.17 L949.4 207.16 L951.4 207.15 L953.4 207.14 L955.4 207.12 L957.4 207.11 L959.4 207.10 L961.4 207.09 L963.4 207.08 L965.4 207.07 L967.4 207.07 L969.4 207.06 L971.4 207.05 L973.4 207.04 L975.4 207.03 L977.4 207.03 L979.4 207.02 L981.4 207.01 L983.4 207.01 L985.4 207.00 L987.4 207.00 L989.4 206.99 L991.4 206.98 L993.4 206.98 L995.4 206.97 L997.4 206.97 L999.4 206.96 L1001.4 206.96 L1003.4 206.95 L1005.4 206.94 L1007.4 206.94 L1009.4 206.93 L1011.4 206.93 L1013.4 206.92 L1015.4 206.91 L1017.4 206.91 L1019.4 206.90 L1020.0 206.90" fill="none" stroke="#7da6ff" stroke-width="1.1"/>
<path d="M561.4 463.50 L563.4 458.99 L565.4 454.44 L567.4 449.88 L569.4 445.35 L571.4 440.86 L573.4 436.45 L575.4 432.15 L577.4 427.92 L579.4 423.75 L581.4 419.63 L583.4 415.56 L585.4 411.55 L587.4 407.58 L589.4 403.67 L591.4 399.79 L593.4 395.96 L595.4 392.17 L597.4 388.42 L599.4 384.71 L601.4 381.05 L603.4 377.42 L605.4 373.84 L607.4 370.29 L609.4 366.77 L611.4 363.27 L613.4 359.80 L615.4 356.37 L617.4 352.98 L619.4 349.65 L621.4 346.39 L623.4 343.19 L625.4 340.09" fill="none" stroke="#ff4a4a" stroke-width="0.95"/>
<path d="M561.4 458.90 L563.4 454.73 L565.4 450.56 L567.4 446.37 L569.4 442.19 L571.4 438.00 L573.4 433.81 L575.4 429.63 L577.4 425.45 L579.4 421.28 L581.4 417.13 L583.4 412.98 L585.4 408.86 L587.4 404.76 L589.4 400.68 L591.4 396.62 L593.4 392.57 L595.4 388.54 L597.4 384.52 L599.4 380.53 L601.4 376.56 L603.4 372.61 L605.4 368.69 L607.4 364.78 L609.4 360.85 L611.4 356.95 L613.4 353.10 L615.4 349.35 L617.4 345.71 L619.4 342.20 L621.4 338.82 L623.4 335.62 L625.4 332.57 L627.4 329.60 L629.4 326.69 L631.4 323.84 L633.4 321.04 L635.4 318.30 L637.4 315.60 L639.4 312.94 L641.4 310.32 L643.4 307.73 L645.4 305.18 L647.4 302.65 L649.4 300.15 L651.4 297.66 L653.4 295.17 L655.4 292.69 L657.4 290.23 L659.4 287.78 L661.4 285.34 L663.4 282.94 L665.4 280.56 L667.4 278.21 L669.4 275.89 L671.4 273.62 L673.4 271.39 L675.4 269.20 L677.4 267.07 L679.4 264.99 L681.4 262.97 L683.4 261.01 L685.4 259.12 L687.4 257.28 L689.4 255.48 L691.4 253.72 L693.4 252.01 L695.4 250.35 L697.4 248.74 L699.4 247.20 L701.4 245.71 L703.4 244.29 L705.4 242.93 L707.4 241.64 L709.4 240.38 L711.4 239.16 L713.4 237.99 L715.4 236.85 L717.4 235.75 L719.4 234.69 L721.4 233.66 L723.4 232.67 L725.4 231.71 L727.4 230.78 L729.4 229.88 L731.4 229.01 L733.4 228.16 L735.4 227.33 L737.4 226.53 L739.4 225.75 L741.4 225.00 L743.4 224.28 L745.4 223.59 L747.4 222.92 L749.4 222.28 L751.4 221.67 L753.4 221.08 L755.4 220.49 L757.4 219.91 L759.4 219.35 L761.4 218.80 L763.4 218.27 L765.4 217.75 L767.4 217.26 L769.4 216.78 L771.4 216.32 L773.4 215.88 L775.4 215.47 L777.4 215.07 L779.4 214.71 L781.4 214.36 L783.4 214.02 L785.4 213.70 L787.4 213.38 L789.4 213.07 L791.4 212.78 L793.4 212.49 L795.4 212.22 L797.4 211.96 L799.4 211.71 L801.4 211.47 L803.4 211.24 L805.4 211.03 L807.4 210.84 L809.4 210.65 L811.4 210.48 L813.4 210.31 L815.4 210.15 L817.4 209.99 L819.4 209.83 L821.4 209.68 L823.4 209.54 L825.4 209.40 L827.4 209.27 L829.4 209.14 L831.4 209.02 L833.4 208.91 L835.4 208.80 L837.4 208.70 L839.4 208.61 L841.4 208.53 L843.4 208.45 L845.4 208.39 L847.4 208.33 L849.4 208.27 L851.4 208.21 L853.4 208.15 L855.4 208.09 L857.4 208.04 L859.4 207.99 L861.4 207.94 L863.4 207.89 L865.4 207.84 L867.4 207.80 L869.4 207.75 L871.4 207.71 L873.4 207.67 L875.4 207.63 L877.4 207.60 L879.4 207.56 L881.4 207.53 L883.4 207.50 L885.4 207.47 L887.4 207.44 L889.4 207.41 L891.4 207.39 L893.4 207.36 L895.4 207.34 L897.4 207.32 L899.4 207.30 L901.4 207.29 L903.4 207.27 L905.4 207.26 L907.4 207.25 L909.4 207.23 L911.4 207.22 L913.4 207.21 L915.4 207.20 L917.4 207.19 L919.4 207.18 L921.4 207.17 L923.4 207.16 L925.4 207.15 L927.4 207.14 L929.4 207.13 L931.4 207.12 L933.4 207.11 L935.4 207.10 L937.4 207.10 L939.4 207.09 L941.4 207.08 L943.4 207.07 L945.4 207.06 L947.4 207.06 L949.4 207.05 L951.4 207.04 L953.4 207.03 L955.4 207.02 L957.4 207.01 L959.4 207.00 L960.0 207.00" fill="none" stroke="#ff5252" stroke-width="1.05"/>
<path d="M810 210.3 L841 209 L841 211.5 L810 216.5 Z" fill="rgba(236,160,140,0.6)"/>
<line x1="561.5" x2="1080" y1="206.7" y2="206.7" stroke="#4f4cc6" stroke-width="1.7"/>
</svg>
<span class="t" style="left:721.8px;top:219px;font-size:8.7px;color:#5a9cc6;transform:translate(-50%,-50%) rotate(-90deg);">4253.99</span>
<span class="t" style="left:760.5px;top:219px;font-size:8.7px;color:#a6c4e6;transform:translate(-50%,-50%) rotate(-90deg);">4290.84</span>
<span class="t" style="left:828.5px;top:219px;font-size:8.7px;color:#a6c4e6;transform:translate(-50%,-50%) rotate(-90deg);">4364.72</span>
<span class="t" style="left:867px;top:219px;font-size:8.7px;color:#5a9cc6;transform:translate(-50%,-50%) rotate(-90deg);">4401.65</span>
<span class="t" style="left:555.6px;top:201.60000000000002px;font-size:8.4px;color:#333;transform:translate(-100%,-50%) scaleX(1);transform-origin:100% 50%;">7%</span>
<span class="t" style="left:555.6px;top:220.97857142857146px;font-size:8.4px;color:#333;transform:translate(-100%,-50%) scaleX(1);transform-origin:100% 50%;">5%</span>
<span class="t" style="left:555.6px;top:240.3571428571429px;font-size:8.4px;color:#333;transform:translate(-100%,-50%) scaleX(1);transform-origin:100% 50%;">2%</span>
<span class="t" style="left:555.6px;top:259.7357142857143px;font-size:8.4px;color:#333;transform:translate(-100%,-50%) scaleX(1);transform-origin:100% 50%;">0%</span>
<span class="t" style="left:555.6px;top:279.11428571428576px;font-size:8.4px;color:#333;transform:translate(-100%,-50%) scaleX(1);transform-origin:100% 50%;">-2%</span>
<span class="t" style="left:555.6px;top:298.4928571428572px;font-size:8.4px;color:#333;transform:translate(-100%,-50%) scaleX(1);transform-origin:100% 50%;">-5%</span>
<span class="t" style="left:555.6px;top:317.87142857142857px;font-size:8.4px;color:#333;transform:translate(-100%,-50%) scaleX(1);transform-origin:100% 50%;">-7%</span>
<span class="t" style="left:555.6px;top:337.25000000000006px;font-size:8.4px;color:#333;transform:translate(-100%,-50%) scaleX(1);transform-origin:100% 50%;">-9%</span>
<span class="t" style="left:555.6px;top:356.62857142857143px;font-size:8.4px;color:#333;transform:translate(-100%,-50%) scaleX(1);transform-origin:100% 50%;">-12%</span>
<span class="t" style="left:555.6px;top:376.0071428571429px;font-size:8.4px;color:#333;transform:translate(-100%,-50%) scaleX(1);transform-origin:100% 50%;">-14%</span>
<span class="t" style="left:555.6px;top:395.3857142857143px;font-size:8.4px;color:#333;transform:translate(-100%,-50%) scaleX(1);transform-origin:100% 50%;">-17%</span>
<span class="t" style="left:555.6px;top:414.7642857142858px;font-size:8.4px;color:#333;transform:translate(-100%,-50%) scaleX(1);transform-origin:100% 50%;">-19%</span>
<span class="t" style="left:555.6px;top:434.14285714285717px;font-size:8.4px;color:#333;transform:translate(-100%,-50%) scaleX(1);transform-origin:100% 50%;">-21%</span>
<span class="t" style="left:555.6px;top:453.5214285714286px;font-size:8.4px;color:#333;transform:translate(-100%,-50%) scaleX(1);transform-origin:100% 50%;">-24%</span>
<span class="t" style="left:555.6px;top:472.90000000000003px;font-size:8.4px;color:#333;transform:translate(-100%,-50%) scaleX(1);transform-origin:100% 50%;">-26%</span>
<div class="r" style="left:520.7px;top:204px;width:37.3px;height:10px;background:#0a8f0a;"></div>
<span class="t" style="left:555.5px;top:209.7px;font-size:8.4px;color:#fff;transform:translate(-100%,-50%) scaleX(1);transform-origin:100% 50%;">6%</span>
<span class="t" style="left:610.3px;top:194px;font-size:8.4px;color:#333;transform:translate(-50%,-50%) scaleX(1);transform-origin:50% 50%;">-4.1%</span>
<span class="t" style="left:662.05px;top:194px;font-size:8.4px;color:#333;transform:translate(-50%,-50%) scaleX(1);transform-origin:50% 50%;">-3.0%</span>
<span class="t" style="left:713.8px;top:194px;font-size:8.4px;color:#333;transform:translate(-50%,-50%) scaleX(1);transform-origin:50% 50%;">-1.8%</span>
<span class="t" style="left:765.55px;top:194px;font-size:8.4px;color:#333;transform:translate(-50%,-50%) scaleX(1);transform-origin:50% 50%;">-0.6%</span>
<span class="t" style="left:817.3px;top:194px;font-size:8.4px;color:#333;transform:translate(-50%,-50%) scaleX(1);transform-origin:50% 50%;">0.5%</span>
<span class="t" style="left:869.05px;top:194px;font-size:8.4px;color:#333;transform:translate(-50%,-50%) scaleX(1);transform-origin:50% 50%;">1.7%</span>
<span class="t" style="left:920.8px;top:194px;font-size:8.4px;color:#333;transform:translate(-50%,-50%) scaleX(1);transform-origin:50% 50%;">2.8%</span>
<span class="t" style="left:972.55px;top:194px;font-size:8.4px;color:#333;transform:translate(-50%,-50%) scaleX(1);transform-origin:50% 50%;">4.0%</span>
<span class="t" style="left:1024.3px;top:194px;font-size:8.4px;color:#333;transform:translate(-50%,-50%) scaleX(1);transform-origin:50% 50%;">5.1%</span>
<span class="t" style="left:1076.05px;top:194px;font-size:8.4px;color:#333;transform:translate(-50%,-50%) scaleX(1);transform-origin:50% 50%;">6.3%</span>
<div class="r" style="left:833px;top:187.3px;width:24.3px;height:9.3px;background:#e8eefa;border:1px solid #7f8fb0;border-radius:1px;"></div>
<span class="t" style="left:845.2px;top:192px;font-size:8.4px;color:#333;transform:translate(-50%,-50%) scaleX(1);transform-origin:50% 50%;">1.1%</span>
<span class="t" style="left:610.3px;top:482.3px;font-size:8.4px;color:#333;transform:translate(-50%,-50%) scaleX(1);transform-origin:50% 50%;">4150</span>
<span class="t" style="left:662.05px;top:482.3px;font-size:8.4px;color:#333;transform:translate(-50%,-50%) scaleX(1);transform-origin:50% 50%;">4200</span>
<span class="t" style="left:713.8px;top:482.3px;font-size:8.4px;color:#333;transform:translate(-50%,-50%) scaleX(1);transform-origin:50% 50%;">4250</span>
<span class="t" style="left:765.55px;top:482.3px;font-size:8.4px;color:#333;transform:translate(-50%,-50%) scaleX(1);transform-origin:50% 50%;">4300</span>
<span class="t" style="left:817.3px;top:482.3px;font-size:8.4px;color:#333;transform:translate(-50%,-50%) scaleX(1);transform-origin:50% 50%;">4350</span>
<span class="t" style="left:869.05px;top:482.3px;font-size:8.4px;color:#333;transform:translate(-50%,-50%) scaleX(1);transform-origin:50% 50%;">4400</span>
<span class="t" style="left:920.8px;top:482.3px;font-size:8.4px;color:#333;transform:translate(-50%,-50%) scaleX(1);transform-origin:50% 50%;">4450</span>
<span class="t" style="left:972.55px;top:482.3px;font-size:8.4px;color:#333;transform:translate(-50%,-50%) scaleX(1);transform-origin:50% 50%;">4500</span>
<span class="t" style="left:1024.3px;top:482.3px;font-size:8.4px;color:#333;transform:translate(-50%,-50%) scaleX(1);transform-origin:50% 50%;">4550</span>
<span class="t" style="left:1076.05px;top:482.3px;font-size:8.4px;color:#333;transform:translate(-50%,-50%) scaleX(1);transform-origin:50% 50%;">4600</span>
<div class="r" style="left:564.7px;top:205px;width:131.8px;height:45.7px;background:rgba(232,239,250,0.79);border:1px solid #9aa3b8;border-radius:3px;"></div>
<div class="r" style="left:571.3px;top:212.3px;width:3px;height:9.4px;background:#f03a3a;"></div>
<div class="r" style="left:571.3px;top:223.4px;width:3px;height:9.4px;background:#86a6f2;"></div>
<div class="r" style="left:571.3px;top:234.5px;width:3px;height:9.4px;background:#86a6f2;"></div>
<span class="t" style="left:574.8px;top:217.3px;font-size:8.6px;color:#666;transform:translate(0,-50%) scaleX(1);transform-origin:0 50%;">-4.20 Realized PnL</span>
<span class="t" style="left:574.8px;top:228.9px;font-size:8.6px;color:#666;transform:translate(0,-50%) scaleX(1);transform-origin:0 50%;">+3</span>
<span class="t" style="left:587.1px;top:228.9px;font-size:8.6px;color:#5a5af0;transform:translate(0,-50%) scaleX(1);transform-origin:0 50%;">20oct. 4060 Put &#916;</span>
<span class="t" style="left:690px;top:228.9px;font-size:8.6px;color:#5a5af0;transform:translate(-100%,-50%) scaleX(1);transform-origin:100% 50%;">-1.76</span>
<span class="t" style="left:574.8px;top:240.1px;font-size:8.6px;color:#666;transform:translate(0,-50%) scaleX(1);transform-origin:0 50%;">-3</span>
<span class="t" style="left:584.4px;top:240.1px;font-size:8.6px;color:#f06a6a;transform:translate(0,-50%) scaleX(1);transform-origin:0 50%;">20oct. 4090 Put &#916;</span>
<span class="t" style="left:687.3px;top:240.1px;font-size:8.6px;color:#f06a6a;transform:translate(-100%,-50%) scaleX(1);transform-origin:100% 50%;">-2.05</span>
<div class="r" style="left:564.5px;top:400.5px;width:86px;height:68.5px;background:rgba(232,239,250,0.79);border:1px solid #9aa3b8;border-radius:3px;"></div>
<span class="t" style="left:571.8px;top:413.2px;font-size:8.4px;color:#7673d2;transform:translate(0,-50%) scaleX(1);transform-origin:0 50%;">20/10/2023 (0)</span>
<span class="t" style="left:571.8px;top:424.33px;font-size:8.4px;color:#b3b259;transform:translate(0,-50%) scaleX(1);transform-origin:0 50%;">19/10/2023 (1) T+3</span>
<span class="t" style="left:571.8px;top:435.46px;font-size:8.4px;color:#a3a3a3;transform:translate(0,-50%) scaleX(1);transform-origin:0 50%;">18/10/2023 (2) T+2</span>
<span class="t" style="left:571.8px;top:446.59px;font-size:8.4px;color:#ff6e6e;transform:translate(0,-50%) scaleX(1);transform-origin:0 50%;">17/10/2023 (3) T+1</span>
<span class="t" style="left:571.8px;top:457.71999999999997px;font-size:8.4px;color:#86abf7;transform:translate(0,-50%) scaleX(1);transform-origin:0 50%;">16/10/2023 (4) T+0</span>
<svg style="left:0;top:0" width="1080" height="675" viewBox="0 0 1080 675"><circle cx="844.6" cy="209.9" r="2.7" fill="#16e6e6" stroke="#1f4f6f" stroke-width="1"/></svg>
<div class="r" style="left:516px;top:645.8px;width:564px;height:20.3px;background:#2e2e2e;"></div>
<span class="t" style="left:1039px;top:655.9px;font-size:10.5px;color:#f2f2f2;transform:translate(-50%,-50%) scaleX(0.95);transform-origin:50% 50%;">240%</span>
<div class="r" style="left:1060px;top:656px;width:3px;height:1.2px;background:#ddd;"></div>
<div class="r" style="left:1067.5px;top:656px;width:13px;height:1.2px;background:#ddd;"></div>
<div class="r" style="left:519px;top:490.3px;width:570px;height:152.5px;background:#e9f0f9;border:1px solid #9eabbf;border-radius:4px;"></div>
<span class="t" style="left:540.5px;top:514.0999999999999px;font-size:8.7px;color:#666;transform:translate(-50%,-50%) scaleX(1);transform-origin:50% 50%;">PnL</span>
<div class="r" style="left:561.9px;top:513.3px;width:75.0px;height:9.60191px;background:#f0737b;border:1px solid #8a8a8a;"></div>
<div class="r" style="left:635.9px;top:513.3px;width:52.75px;height:3.80172px;background:#f0737b;border:1px solid #8a8a8a;"></div>
<div class="r" style="left:687.65px;top:512.0999999999999px;width:52.75px;height:2.2px;background:#5a7af6;border:1px solid #8a8a8a;"></div>
<div class="r" style="left:739.4px;top:510.71517719999997px;width:52.75px;height:3.5848228px;background:#5a7af6;border:1px solid #8a8a8a;"></div>
<div class="r" style="left:791.15px;top:509.86080999999996px;width:52.75px;height:4.43919px;background:#5a7af6;border:1px solid #8a8a8a;"></div>
<div class="r" style="left:842.9px;top:509.52775159999993px;width:52.75px;height:4.7722484000000005px;background:#5a7af6;border:1px solid #8a8a8a;"></div>
<div class="r" style="left:894.65px;top:509.426386px;width:52.75px;height:4.873614px;background:#5a7af6;border:1px solid #8a8a8a;"></div>
<div class="r" style="left:946.4px;top:509.4046648px;width:52.75px;height:4.8953352px;background:#5a7af6;border:1px solid #8a8a8a;"></div>
<div class="r" style="left:998.15px;top:509.4119052px;width:52.750000000000114px;height:4.8880948px;background:#5a7af6;border:1px solid #8a8a8a;"></div>
<div class="r" style="left:1049.9px;top:509.4191456px;width:33.09999999999991px;height:4.8808544000000005px;background:#5a7af6;border:1px solid #8a8a8a;"></div>
<div class="r" style="left:561.9px;top:513.3px;width:520px;height:1px;background:#7c7c7c;"></div>
<span class="t" style="left:610.0px;top:499.99999999999994px;font-size:8.4px;color:#f06a6a;transform:translate(-50%,-50%) scaleX(1);transform-origin:50% 50%;">-13%</span>
<span class="t" style="left:610.0px;top:509.49999999999994px;font-size:8.4px;color:#f06a6a;transform:translate(-50%,-50%) scaleX(1);transform-origin:50% 50%;">-1093</span>
<span class="t" style="left:661.75px;top:499.99999999999994px;font-size:8.4px;color:#f06a6a;transform:translate(-50%,-50%) scaleX(1);transform-origin:50% 50%;">-4%</span>
<span class="t" style="left:661.75px;top:509.49999999999994px;font-size:8.4px;color:#f06a6a;transform:translate(-50%,-50%) scaleX(1);transform-origin:50% 50%;">-356</span>
<span class="t" style="left:713.5px;top:518.4px;font-size:8.4px;color:#6a6af0;transform:translate(-50%,-50%) scaleX(1);transform-origin:50% 50%;">106</span>
<span class="t" style="left:713.5px;top:526.3px;font-size:8.4px;color:#6a6af0;transform:translate(-50%,-50%) scaleX(1);transform-origin:50% 50%;">1%</span>
<span class="t" style="left:765.25px;top:518.4px;font-size:8.4px;color:#6a6af0;transform:translate(-50%,-50%) scaleX(1);transform-origin:50% 50%;">357</span>
<span class="t" style="left:765.25px;top:526.3px;font-size:8.4px;color:#6a6af0;transform:translate(-50%,-50%) scaleX(1);transform-origin:50% 50%;">4%</span>
<span class="t" style="left:817.0px;top:518.4px;font-size:8.4px;color:#6a6af0;transform:translate(-50%,-50%) scaleX(1);transform-origin:50% 50%;">475</span>
<span class="t" style="left:817.0px;top:526.3px;font-size:8.4px;color:#6a6af0;transform:translate(-50%,-50%) scaleX(1);transform-origin:50% 50%;">6%</span>
<span class="t" style="left:868.75px;top:518.4px;font-size:8.4px;color:#6a6af0;transform:translate(-50%,-50%) scaleX(1);transform-origin:50% 50%;">521</span>
<span class="t" style="left:868.75px;top:526.3px;font-size:8.4px;color:#6a6af0;transform:translate(-50%,-50%) scaleX(1);transform-origin:50% 50%;">6%</span>
<span class="t" style="left:920.5px;top:518.4px;font-size:8.4px;color:#6a6af0;transform:translate(-50%,-50%) scaleX(1);transform-origin:50% 50%;">535</span>
<span class="t" style="left:920.5px;top:526.3px;font-size:8.4px;color:#6a6af0;transform:translate(-50%,-50%) scaleX(1);transform-origin:50% 50%;">6%</span>
<span class="t" style="left:972.25px;top:518.4px;font-size:8.4px;color:#6a6af0;transform:translate(-50%,-50%) scaleX(1);transform-origin:50% 50%;">538</span>
<span class="t" style="left:972.25px;top:526.3px;font-size:8.4px;color:#6a6af0;transform:translate(-50%,-50%) scaleX(1);transform-origin:50% 50%;">6%</span>
<span class="t" style="left:1024.0px;top:518.4px;font-size:8.4px;color:#6a6af0;transform:translate(-50%,-50%) scaleX(1);transform-origin:50% 50%;">537</span>
<span class="t" style="left:1024.0px;top:526.3px;font-size:8.4px;color:#6a6af0;transform:translate(-50%,-50%) scaleX(1);transform-origin:50% 50%;">6%</span>
<span class="t" style="left:1075.75px;top:518.4px;font-size:8.4px;color:#6a6af0;transform:translate(-50%,-50%) scaleX(1);transform-origin:50% 50%;">536</span>
<span class="t" style="left:1075.75px;top:526.3px;font-size:8.4px;color:#6a6af0;transform:translate(-50%,-50%) scaleX(1);transform-origin:50% 50%;">6%</span>
<span class="t" style="left:540.5px;top:548.8px;font-size:8.7px;color:#666;transform:translate(-50%,-50%) scaleX(1);transform-origin:50% 50%;">Delta</span>
<div class="r" style="left:561.9px;top:539.70704px;width:75.0px;height:9.29296px;background:#5a7af6;border:1px solid #8a8a8a;"></div>
<div class="r" style="left:635.9px;top:542.46356px;width:52.75px;height:6.536440000000001px;background:#5a7af6;border:1px solid #8a8a8a;"></div>
<div class="r" style="left:687.65px;top:544.78484px;width:52.75px;height:4.21516px;background:#5a7af6;border:1px solid #8a8a8a;"></div>
<div class="r" style="left:739.4px;top:546.3854px;width:52.75px;height:2.6146000000000003px;background:#5a7af6;border:1px solid #8a8a8a;"></div>
<div class="r" style="left:791.15px;top:546.8px;width:52.75px;height:2.2px;background:#5a7af6;border:1px solid #8a8a8a;"></div>
<div class="r" style="left:561.9px;top:548px;width:520px;height:1px;background:#7c7c7c;"></div>
<span class="t" style="left:610.0px;top:553.5px;font-size:8.4px;color:#6a6af0;transform:translate(-50%,-50%) scaleX(1);transform-origin:50% 50%;">17.72</span>
<span class="t" style="left:661.75px;top:553.5px;font-size:8.4px;color:#6a6af0;transform:translate(-50%,-50%) scaleX(1);transform-origin:50% 50%;">11.83</span>
<span class="t" style="left:713.5px;top:553.5px;font-size:8.4px;color:#6a6af0;transform:translate(-50%,-50%) scaleX(1);transform-origin:50% 50%;">6.87</span>
<span class="t" style="left:765.25px;top:553.5px;font-size:8.4px;color:#6a6af0;transform:translate(-50%,-50%) scaleX(1);transform-origin:50% 50%;">3.45</span>
<span class="t" style="left:817.0px;top:553.5px;font-size:8.4px;color:#6a6af0;transform:translate(-50%,-50%) scaleX(1);transform-origin:50% 50%;">1.47</span>
<span class="t" style="left:868.75px;top:553.5px;font-size:8.4px;color:#6a6af0;transform:translate(-50%,-50%) scaleX(1);transform-origin:50% 50%;">0.51</span>
<span class="t" style="left:920.5px;top:553.5px;font-size:8.4px;color:#6a6af0;transform:translate(-50%,-50%) scaleX(1);transform-origin:50% 50%;">0.12</span>
<span class="t" style="left:972.25px;top:553.5px;font-size:8.4px;color:#6a6af0;transform:translate(-50%,-50%) scaleX(1);transform-origin:50% 50%;">0.01</span>
<span class="t" style="left:1024.0px;top:544.7px;font-size:8.4px;color:#f06a6a;transform:translate(-50%,-50%) scaleX(1);transform-origin:50% 50%;">-0.02</span>
<span class="t" style="left:1075.75px;top:544.7px;font-size:8.4px;color:#f06a6a;transform:translate(-50%,-50%) scaleX(1);transform-origin:50% 50%;">-0.03</span>
<span class="t" style="left:540.5px;top:575.5px;font-size:8.7px;color:#666;transform:translate(-50%,-50%) scaleX(1);transform-origin:50% 50%;">Gamma</span>
<div class="r" style="left:561.9px;top:574.7px;width:75.0px;height:9.879999999999999px;background:#f0737b;border:1px solid #8a8a8a;"></div>
<div class="r" style="left:635.9px;top:574.7px;width:52.75px;height:9.14px;background:#f0737b;border:1px solid #8a8a8a;"></div>
<div class="r" style="left:687.65px;top:574.7px;width:52.75px;height:6.92px;background:#f0737b;border:1px solid #8a8a8a;"></div>
<div class="r" style="left:739.4px;top:574.7px;width:52.75px;height:4.7px;background:#f0737b;border:1px solid #8a8a8a;"></div>
<div class="r" style="left:791.15px;top:574.7px;width:52.75px;height:3.2199999999999998px;background:#f0737b;border:1px solid #8a8a8a;"></div>
<div class="r" style="left:842.9px;top:574.7px;width:52.75px;height:2.2px;background:#f0737b;border:1px solid #8a8a8a;"></div>
<div class="r" style="left:561.9px;top:574.7px;width:520px;height:1px;background:#7c7c7c;"></div>
<span class="t" style="left:610.0px;top:571.4000000000001px;font-size:8.4px;color:#f06a6a;transform:translate(-50%,-50%) scaleX(1);transform-origin:50% 50%;">-0.12</span>
<span class="t" style="left:661.75px;top:571.4000000000001px;font-size:8.4px;color:#f06a6a;transform:translate(-50%,-50%) scaleX(1);transform-origin:50% 50%;">-0.11</span>
<span class="t" style="left:713.5px;top:571.4000000000001px;font-size:8.4px;color:#f06a6a;transform:translate(-50%,-50%) scaleX(1);transform-origin:50% 50%;">-0.08</span>
<span class="t" style="left:765.25px;top:571.4000000000001px;font-size:8.4px;color:#f06a6a;transform:translate(-50%,-50%) scaleX(1);transform-origin:50% 50%;">-0.05</span>
<span class="t" style="left:817.0px;top:571.4000000000001px;font-size:8.4px;color:#f06a6a;transform:translate(-50%,-50%) scaleX(1);transform-origin:50% 50%;">-0.03</span>
<span class="t" style="left:868.75px;top:571.4000000000001px;font-size:8.4px;color:#f06a6a;transform:translate(-50%,-50%) scaleX(1);transform-origin:50% 50%;">-0.01</span>
<span class="t" style="left:920.5px;top:580.2px;font-size:8.4px;color:#6a6af0;transform:translate(-50%,-50%) scaleX(1);transform-origin:50% 50%;">0.00</span>
<span class="t" style="left:972.25px;top:580.2px;font-size:8.4px;color:#6a6af0;transform:translate(-50%,-50%) scaleX(1);transform-origin:50% 50%;">0.00</span>
<span class="t" style="left:1024.0px;top:580.2px;font-size:8.4px;color:#6a6af0;transform:translate(-50%,-50%) scaleX(1);transform-origin:50% 50%;">0.00</span>
<span class="t" style="left:1075.75px;top:580.2px;font-size:8.4px;color:#6a6af0;transform:translate(-50%,-50%) scaleX(1);transform-origin:50% 50%;">0.00</span>
<span class="t" style="left:540.5px;top:602.0999999999999px;font-size:8.7px;color:#666;transform:translate(-50%,-50%) scaleX(1);transform-origin:50% 50%;">Theta</span>
<div class="r" style="left:561.9px;top:597.800788px;width:75.0px;height:4.499212px;background:#5a7af6;border:1px solid #8a8a8a;"></div>
<div class="r" style="left:635.9px;top:592.15026px;width:52.75px;height:10.14974px;background:#5a7af6;border:1px solid #8a8a8a;"></div>
<div class="r" style="left:687.65px;top:592.40458px;width:52.75px;height:9.89542px;background:#5a7af6;border:1px solid #8a8a8a;"></div>
<div class="r" style="left:739.4px;top:595.3951519999999px;width:52.75px;height:6.904847999999999px;background:#5a7af6;border:1px solid #8a8a8a;"></div>
<div class="r" style="left:791.15px;top:598.481672px;width:52.75px;height:3.8183279999999997px;background:#5a7af6;border:1px solid #8a8a8a;"></div>
<div class="r" style="left:842.9px;top:600.0999999999999px;width:52.75px;height:2.2px;background:#5a7af6;border:1px solid #8a8a8a;"></div>
<div class="r" style="left:561.9px;top:601.3px;width:520px;height:1px;background:#7c7c7c;"></div>
<span class="t" style="left:610.0px;top:606.8px;font-size:8.4px;color:#6a6af0;transform:translate(-50%,-50%) scaleX(1);transform-origin:50% 50%;">30.27</span>
<span class="t" style="left:661.75px;top:606.8px;font-size:8.4px;color:#6a6af0;transform:translate(-50%,-50%) scaleX(1);transform-origin:50% 50%;">79.15</span>
<span class="t" style="left:713.5px;top:606.8px;font-size:8.4px;color:#6a6af0;transform:translate(-50%,-50%) scaleX(1);transform-origin:50% 50%;">76.95</span>
<span class="t" style="left:765.25px;top:606.8px;font-size:8.4px;color:#6a6af0;transform:translate(-50%,-50%) scaleX(1);transform-origin:50% 50%;">51.08</span>
<span class="t" style="left:817.0px;top:606.8px;font-size:8.4px;color:#6a6af0;transform:translate(-50%,-50%) scaleX(1);transform-origin:50% 50%;">24.38</span>
<span class="t" style="left:868.75px;top:606.8px;font-size:8.4px;color:#6a6af0;transform:translate(-50%,-50%) scaleX(1);transform-origin:50% 50%;">9.09</span>
<span class="t" style="left:920.5px;top:598.0px;font-size:8.4px;color:#f06a6a;transform:translate(-50%,-50%) scaleX(1);transform-origin:50% 50%;">-0.62</span>
<span class="t" style="left:972.25px;top:598.0px;font-size:8.4px;color:#f06a6a;transform:translate(-50%,-50%) scaleX(1);transform-origin:50% 50%;">-2.51</span>
<span class="t" style="left:1024.0px;top:598.0px;font-size:8.4px;color:#f06a6a;transform:translate(-50%,-50%) scaleX(1);transform-origin:50% 50%;">-2.06</span>
<span class="t" style="left:1075.75px;top:598.0px;font-size:8.4px;color:#f06a6a;transform:translate(-50%,-50%) scaleX(1);transform-origin:50% 50%;">-1.28</span>
<span class="t" style="left:540.5px;top:628.1999999999999px;font-size:8.7px;color:#666;transform:translate(-50%,-50%) scaleX(1);transform-origin:50% 50%;">Vega</span>
<div class="r" style="left:561.9px;top:627.4px;width:75.0px;height:9.28884px;background:#f0737b;border:1px solid #8a8a8a;"></div>
<div class="r" style="left:635.9px;top:627.4px;width:52.75px;height:10.090480000000001px;background:#f0737b;border:1px solid #8a8a8a;"></div>
<div class="r" style="left:687.65px;top:627.4px;width:52.75px;height:8.37352px;background:#f0737b;border:1px solid #8a8a8a;"></div>
<div class="r" style="left:739.4px;top:627.4px;width:52.75px;height:5.75888px;background:#f0737b;border:1px solid #8a8a8a;"></div>
<div class="r" style="left:791.15px;top:627.4px;width:52.75px;height:3.4794px;background:#f0737b;border:1px solid #8a8a8a;"></div>
<div class="r" style="left:842.9px;top:627.4px;width:52.75px;height:2.2px;background:#f0737b;border:1px solid #8a8a8a;"></div>
<div class="r" style="left:561.9px;top:627.4px;width:520px;height:1px;background:#7c7c7c;"></div>
<span class="t" style="left:610.0px;top:624.1px;font-size:8.4px;color:#f06a6a;transform:translate(-50%,-50%) scaleX(1);transform-origin:50% 50%;">-42.29</span>
<span class="t" style="left:661.75px;top:624.1px;font-size:8.4px;color:#f06a6a;transform:translate(-50%,-50%) scaleX(1);transform-origin:50% 50%;">-46.38</span>
<span class="t" style="left:713.5px;top:624.1px;font-size:8.4px;color:#f06a6a;transform:translate(-50%,-50%) scaleX(1);transform-origin:50% 50%;">-37.62</span>
<span class="t" style="left:765.25px;top:624.1px;font-size:8.4px;color:#f06a6a;transform:translate(-50%,-50%) scaleX(1);transform-origin:50% 50%;">-24.28</span>
<span class="t" style="left:817.0px;top:624.1px;font-size:8.4px;color:#f06a6a;transform:translate(-50%,-50%) scaleX(1);transform-origin:50% 50%;">-12.65</span>
<span class="t" style="left:868.75px;top:624.1px;font-size:8.4px;color:#f06a6a;transform:translate(-50%,-50%) scaleX(1);transform-origin:50% 50%;">-5.18</span>
<span class="t" style="left:920.5px;top:624.1px;font-size:8.4px;color:#f06a6a;transform:translate(-50%,-50%) scaleX(1);transform-origin:50% 50%;">-1.46</span>
<span class="t" style="left:972.25px;top:624.1px;font-size:8.4px;color:#f06a6a;transform:translate(-50%,-50%) scaleX(1);transform-origin:50% 50%;">-0.08</span>
<span class="t" style="left:1024.0px;top:632.9px;font-size:8.4px;color:#6a6af0;transform:translate(-50%,-50%) scaleX(1);transform-origin:50% 50%;">0.23</span>
<span class="t" style="left:1075.75px;top:632.9px;font-size:8.4px;color:#6a6af0;transform:translate(-50%,-50%) scaleX(1);transform-origin:50% 50%;">0.15</span>
<div class="r" style="left:824px;top:476px;width:40.6px;height:166.5px;background:rgba(231,238,247,0.93);border:1px solid #8c9dbf;border-radius:4px;"></div>
<span class="t" style="left:844.5px;top:482.8px;font-size:8.8px;color:#222;transform:translate(-50%,-50%) scaleX(1);transform-origin:50% 50%;">4377.17</span>
<span class="t" style="left:844.5px;top:509.6px;font-size:8.8px;color:#3434ee;transform:translate(-50%,-50%) scaleX(1);transform-origin:50% 50%;">506</span>
<span class="t" style="left:844.5px;top:522.6px;font-size:8.8px;color:#3434ee;transform:translate(-50%,-50%) scaleX(1);transform-origin:50% 50%;">6.0%</span>
<span class="t" style="left:844.5px;top:548.4px;font-size:8.8px;color:#3434ee;transform:translate(-50%,-50%) scaleX(1);transform-origin:50% 50%;">0.85</span>
<span class="t" style="left:844.5px;top:575.5px;font-size:8.8px;color:#ee2a2a;transform:translate(-50%,-50%) scaleX(1);transform-origin:50% 50%;">-0.02</span>
<span class="t" style="left:844.5px;top:601.4px;font-size:8.8px;color:#3434ee;transform:translate(-50%,-50%) scaleX(1);transform-origin:50% 50%;">13.65</span>
<span class="t" style="left:844.5px;top:627.8px;font-size:8.8px;color:#ee2a2a;transform:translate(-50%,-50%) scaleX(1);transform-origin:50% 50%;">-8.05</span>
</div></body></html>
